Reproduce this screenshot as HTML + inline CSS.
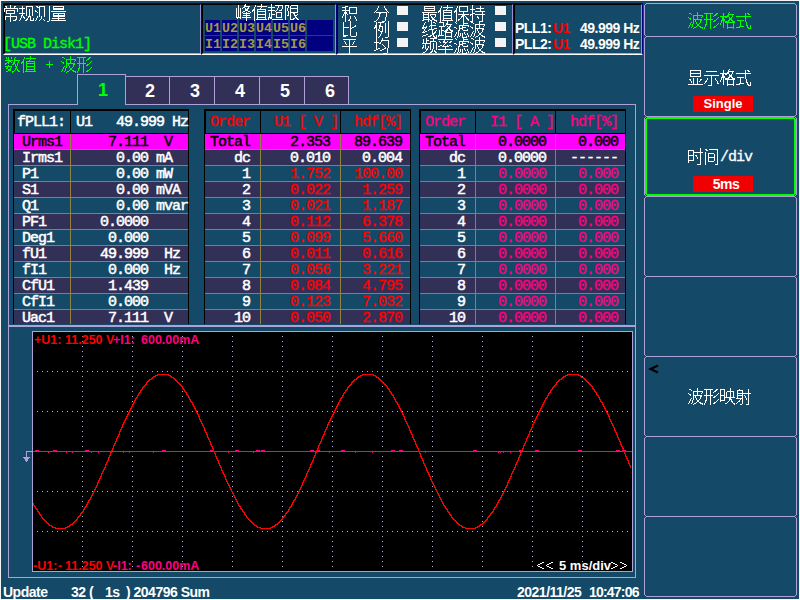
<!DOCTYPE html><html><head><meta charset="utf-8"><title>Power analyzer</title><style>*{margin:0;padding:0;box-sizing:border-box}
html,body{width:800px;height:600px;overflow:hidden;background:#f4f4f4;position:relative}
.a{position:absolute}
.m{font-family:"Liberation Mono",monospace;font-weight:normal;font-size:15px;letter-spacing:-1px;line-height:16px;white-space:pre;-webkit-text-stroke:0.5px currentColor}
.m13{font-family:"Liberation Mono",monospace;font-weight:bold;font-size:13.3px;line-height:13px;white-space:pre}
.mt{font-family:"Liberation Mono",monospace;font-weight:normal;font-size:15px;letter-spacing:-1px;line-height:16px;white-space:pre;-webkit-text-stroke:0.3px currentColor}
.mr{font-family:"Liberation Mono",monospace;font-weight:normal;font-size:15px;letter-spacing:-1px;line-height:16px;white-space:pre;-webkit-text-stroke:0.35px currentColor}
.s13{font-family:"Liberation Sans",sans-serif;font-weight:bold;font-size:13px;line-height:14px;white-space:pre}
.s14{font-family:"Liberation Sans",sans-serif;font-weight:bold;font-size:14px;letter-spacing:-0.5px;line-height:14px;white-space:pre}
.s12{font-family:"Liberation Sans",sans-serif;font-weight:bold;font-size:12.5px;line-height:12px;white-space:pre}
.s15r{font-family:"Liberation Sans",sans-serif;font-weight:normal;font-size:15px;line-height:15px;letter-spacing:-1px;white-space:pre}
.s12r{font-family:"Liberation Sans",sans-serif;font-weight:normal;font-size:12px;line-height:12px;white-space:pre}
.s11{font-family:"Liberation Sans",sans-serif;font-weight:bold;font-size:11px;line-height:12px;white-space:pre}
.s18{font-family:"Liberation Sans",sans-serif;font-weight:bold;font-size:18px;line-height:18px;white-space:pre}
.c60{width:60px;text-align:center}
</style></head><body><div class="a" style="left:1px;top:1px;width:798px;height:598px;background:#144a68;"></div><div class="a" style="left:3px;top:3px;width:199px;height:52px;border-top:1px solid #000080;border-left:1px solid #000080;border-bottom:1px solid #fff;border-right:1px solid #fff"><div style="width:100%;height:100%;border-top:1px solid #000;border-left:1px solid #000;border-bottom:1px solid #b0a0d8;border-right:1px solid #9890d0"></div></div><div class="a" style="left:201px;top:3px;width:136px;height:52px;border-top:1px solid #000080;border-left:1px solid #000080;border-bottom:1px solid #fff;border-right:1px solid #fff"><div style="width:100%;height:100%;border-top:1px solid #000;border-left:1px solid #000;border-bottom:1px solid #b0a0d8;border-right:1px solid #9890d0"></div></div><div class="a" style="left:336px;top:3px;width:178px;height:52px;border-top:1px solid #000080;border-left:1px solid #000080;border-bottom:1px solid #fff;border-right:1px solid #fff"><div style="width:100%;height:100%;border-top:1px solid #000;border-left:1px solid #000;border-bottom:1px solid #b0a0d8;border-right:1px solid #9890d0"></div></div><div class="a" style="left:513px;top:3px;width:130px;height:52px;border-top:1px solid #000080;border-left:1px solid #000080;border-bottom:1px solid #fff;border-right:1px solid #000080"><div style="width:100%;height:100%;border-top:1px solid #000;border-left:1px solid #000;border-bottom:1px solid #b0a0d8;border-right:1px solid #9890d0"></div></div><div class="a mr" style="left:3px;top:37px;color:#00ff00;">[USB Disk1]</div><div class="a" style="left:205px;top:20px;width:15px;height:15px;background:#000080;"></div><div class="a m13" style="left:205px;top:22px;color:#a09848;">U1</div><div class="a" style="left:222px;top:20px;width:15px;height:15px;background:#000080;"></div><div class="a m13" style="left:222px;top:22px;color:#a09848;">U2</div><div class="a" style="left:239px;top:20px;width:15px;height:15px;background:#000080;"></div><div class="a m13" style="left:239px;top:22px;color:#a09848;">U3</div><div class="a" style="left:256px;top:20px;width:15px;height:15px;background:#000080;"></div><div class="a m13" style="left:256px;top:22px;color:#a09848;">U4</div><div class="a" style="left:273px;top:20px;width:15px;height:15px;background:#000080;"></div><div class="a m13" style="left:273px;top:22px;color:#a09848;">U5</div><div class="a" style="left:290px;top:20px;width:15px;height:15px;background:#000080;"></div><div class="a m13" style="left:290px;top:22px;color:#a09848;">U6</div><div class="a" style="left:307px;top:20px;width:26px;height:15px;background:#000080;"></div><div class="a" style="left:205px;top:36px;width:15px;height:15px;background:#000080;"></div><div class="a m13" style="left:205px;top:38px;color:#a09848;">I1</div><div class="a" style="left:222px;top:36px;width:15px;height:15px;background:#000080;"></div><div class="a m13" style="left:222px;top:38px;color:#a09848;">I2</div><div class="a" style="left:239px;top:36px;width:15px;height:15px;background:#000080;"></div><div class="a m13" style="left:239px;top:38px;color:#a09848;">I3</div><div class="a" style="left:256px;top:36px;width:15px;height:15px;background:#000080;"></div><div class="a m13" style="left:256px;top:38px;color:#a09848;">I4</div><div class="a" style="left:273px;top:36px;width:15px;height:15px;background:#000080;"></div><div class="a m13" style="left:273px;top:38px;color:#a09848;">I5</div><div class="a" style="left:290px;top:36px;width:15px;height:15px;background:#000080;"></div><div class="a m13" style="left:290px;top:38px;color:#a09848;">I6</div><div class="a" style="left:307px;top:36px;width:26px;height:15px;background:#000080;"></div><div class="a" style="left:397px;top:6px;width:11px;height:9px;background:#f4f4f4;"></div><div class="a" style="left:495px;top:6px;width:11px;height:9px;background:#f4f4f4;"></div><div class="a" style="left:397px;top:22px;width:11px;height:9px;background:#f4f4f4;"></div><div class="a" style="left:495px;top:22px;width:11px;height:9px;background:#f4f4f4;"></div><div class="a" style="left:397px;top:38px;width:11px;height:9px;background:#f4f4f4;"></div><div class="a" style="left:495px;top:38px;width:11px;height:9px;background:#f4f4f4;"></div><div class="a s14" style="left:515px;top:21px;color:#ffffff;">PLL1:</div><div class="a s14" style="left:553px;top:21px;color:#ff0000;">U1</div><div class="a s14" style="left:580px;top:21px;color:#ffffff;">49.999 Hz</div><div class="a s14" style="left:515px;top:37px;color:#ffffff;">PLL2:</div><div class="a s14" style="left:553px;top:37px;color:#ff0000;">U1</div><div class="a s14" style="left:580px;top:37px;color:#ffffff;">49.999 Hz</div><svg class="a" style="left:46px;top:60px" width="8" height="10"><path fill="#00ff00" d="M0 4h7v1h-7zM3 1h1v7h-1z"/></svg><svg class="a" style="left:0;top:0" width="800" height="600"><path fill="#b0a0d8" d="M646 3h149v1h-149zM646 36h149v1h-149zM646 116h149v1h-149zM646 196h149v1h-149zM646 276h149v1h-149zM646 356h149v1h-149zM646 436h149v1h-149zM646 516h149v1h-149zM646 596h149v1h-149zM644 5h1v30h-1zM796 5h1v30h-1zM645 4h1v1h-1zM645 35h1v1h-1zM795 4h1v1h-1zM795 35h1v1h-1zM644 38h1v77h-1zM796 38h1v77h-1zM645 37h1v1h-1zM645 115h1v1h-1zM795 37h1v1h-1zM795 115h1v1h-1zM644 118h1v77h-1zM796 118h1v77h-1zM645 117h1v1h-1zM645 195h1v1h-1zM795 117h1v1h-1zM795 195h1v1h-1zM644 198h1v77h-1zM796 198h1v77h-1zM645 197h1v1h-1zM645 275h1v1h-1zM795 197h1v1h-1zM795 275h1v1h-1zM644 278h1v77h-1zM796 278h1v77h-1zM645 277h1v1h-1zM645 355h1v1h-1zM795 277h1v1h-1zM795 355h1v1h-1zM644 358h1v77h-1zM796 358h1v77h-1zM645 357h1v1h-1zM645 435h1v1h-1zM795 357h1v1h-1zM795 435h1v1h-1zM644 438h1v77h-1zM796 438h1v77h-1zM645 437h1v1h-1zM645 515h1v1h-1zM795 437h1v1h-1zM795 515h1v1h-1zM644 518h1v77h-1zM796 518h1v77h-1zM645 517h1v1h-1zM645 595h1v1h-1zM795 517h1v1h-1zM795 595h1v1h-1z"/><path fill="#00ff00" d="M647 117h147v2h-147zM647 194h147v2h-147zM645 119h2v75h-2zM794 119h2v75h-2zM646 118h1v1h-1zM794 118h1v1h-1zM646 194h1v1h-1zM794 194h1v1h-1z"/></svg><div class="a" style="left:693px;top:96px;width:60px;height:16px;background:#f00000;"></div><div class="a s13 c60" style="left:693px;top:97px;color:#ffffff;">Single</div><div class="a mt" style="left:720px;top:150px;color:#ffffff;">/div</div><div class="a" style="left:693px;top:176px;width:60px;height:16px;background:#f00000;"></div><div class="a s14 c60" style="left:696px;top:177px;color:#ffffff;">5ms</div><svg class="a" style="left:648px;top:364px" width="12" height="11"><path d="M10 1.5 L2.5 5 L10 8.5" stroke="#000" stroke-width="2.2" fill="none"/></svg><div class="a" style="left:8px;top:104px;width:1px;height:474px;background:#b0a0d8;"></div><div class="a" style="left:635px;top:104px;width:1px;height:474px;background:#b0a0d8;"></div><div class="a" style="left:8px;top:104px;width:70px;height:1px;background:#b0a0d8;"></div><div class="a" style="left:125px;top:104px;width:511px;height:1px;background:#b0a0d8;"></div><div class="a" style="left:8px;top:325px;width:628px;height:2px;background:#b0a0d8;"></div><div class="a" style="left:8px;top:577px;width:628px;height:1px;background:#b0a0d8;"></div><div class="a" style="left:77px;top:74px;width:1px;height:31px;background:#b0a0d8;"></div><div class="a" style="left:77px;top:74px;width:49px;height:1px;background:#b0a0d8;"></div><div class="a" style="left:125px;top:74px;width:1px;height:31px;background:#b0a0d8;"></div><div class="a" style="left:126px;top:77px;width:223px;height:27px;background:#333058;"></div><div class="a" style="left:125px;top:76px;width:224px;height:1px;background:#b0a0d8;"></div><div class="a" style="left:169px;top:76px;width:1px;height:28px;background:#b0a0d8;"></div><div class="a" style="left:214px;top:76px;width:1px;height:28px;background:#b0a0d8;"></div><div class="a" style="left:259px;top:76px;width:1px;height:28px;background:#b0a0d8;"></div><div class="a" style="left:304px;top:76px;width:1px;height:28px;background:#b0a0d8;"></div><div class="a" style="left:348px;top:76px;width:1px;height:28px;background:#b0a0d8;"></div><div class="a s18" style="left:98px;top:81px;color:#00ff00;">1</div><div class="a s18" style="left:145px;top:82px;color:#ffffff;">2</div><div class="a s18" style="left:190px;top:82px;color:#ffffff;">3</div><div class="a s18" style="left:235px;top:82px;color:#ffffff;">4</div><div class="a s18" style="left:280px;top:82px;color:#ffffff;">5</div><div class="a s18" style="left:325px;top:82px;color:#ffffff;">6</div><div class="a" style="left:13px;top:109px;width:176px;height:215px;background:#000;"></div><div class="a" style="left:15px;top:111px;width:173px;height:22px;background:#144a68;"></div><div class="a" style="left:70px;top:111px;width:1px;height:22px;background:#000;"></div><div class="a" style="left:14px;top:134px;width:174px;height:15px;background:#ff00ff;"></div><div class="a" style="left:14px;top:149px;width:174px;height:1px;background:#8c8440;"></div><div class="a" style="left:14px;top:150px;width:174px;height:15px;background:#333058;"></div><div class="a" style="left:14px;top:165px;width:174px;height:1px;background:#8c8440;"></div><div class="a" style="left:14px;top:166px;width:174px;height:15px;background:#144a68;"></div><div class="a" style="left:14px;top:181px;width:174px;height:1px;background:#8c8440;"></div><div class="a" style="left:14px;top:182px;width:174px;height:15px;background:#333058;"></div><div class="a" style="left:14px;top:197px;width:174px;height:1px;background:#8c8440;"></div><div class="a" style="left:14px;top:198px;width:174px;height:15px;background:#144a68;"></div><div class="a" style="left:14px;top:213px;width:174px;height:1px;background:#8c8440;"></div><div class="a" style="left:14px;top:214px;width:174px;height:15px;background:#333058;"></div><div class="a" style="left:14px;top:229px;width:174px;height:1px;background:#8c8440;"></div><div class="a" style="left:14px;top:230px;width:174px;height:15px;background:#144a68;"></div><div class="a" style="left:14px;top:245px;width:174px;height:1px;background:#8c8440;"></div><div class="a" style="left:14px;top:246px;width:174px;height:15px;background:#333058;"></div><div class="a" style="left:14px;top:261px;width:174px;height:1px;background:#8c8440;"></div><div class="a" style="left:14px;top:262px;width:174px;height:15px;background:#144a68;"></div><div class="a" style="left:14px;top:277px;width:174px;height:1px;background:#8c8440;"></div><div class="a" style="left:14px;top:278px;width:174px;height:15px;background:#333058;"></div><div class="a" style="left:14px;top:293px;width:174px;height:1px;background:#8c8440;"></div><div class="a" style="left:14px;top:294px;width:174px;height:15px;background:#144a68;"></div><div class="a" style="left:14px;top:309px;width:174px;height:1px;background:#8c8440;"></div><div class="a" style="left:14px;top:310px;width:174px;height:14px;background:#333058;"></div><div class="a" style="left:70px;top:134px;width:1px;height:190px;background:#8c8440;"></div><div class="a" style="left:204px;top:109px;width:207px;height:215px;background:#000;"></div><div class="a" style="left:206px;top:111px;width:204px;height:22px;background:#144a68;"></div><div class="a" style="left:260px;top:111px;width:1px;height:22px;background:#000;"></div><div class="a" style="left:340px;top:111px;width:1px;height:22px;background:#000;"></div><div class="a" style="left:205px;top:134px;width:205px;height:15px;background:#ff00ff;"></div><div class="a" style="left:205px;top:149px;width:205px;height:1px;background:#8c8440;"></div><div class="a" style="left:205px;top:150px;width:205px;height:15px;background:#333058;"></div><div class="a" style="left:205px;top:165px;width:205px;height:1px;background:#8c8440;"></div><div class="a" style="left:205px;top:166px;width:205px;height:15px;background:#144a68;"></div><div class="a" style="left:205px;top:181px;width:205px;height:1px;background:#8c8440;"></div><div class="a" style="left:205px;top:182px;width:205px;height:15px;background:#333058;"></div><div class="a" style="left:205px;top:197px;width:205px;height:1px;background:#8c8440;"></div><div class="a" style="left:205px;top:198px;width:205px;height:15px;background:#144a68;"></div><div class="a" style="left:205px;top:213px;width:205px;height:1px;background:#8c8440;"></div><div class="a" style="left:205px;top:214px;width:205px;height:15px;background:#333058;"></div><div class="a" style="left:205px;top:229px;width:205px;height:1px;background:#8c8440;"></div><div class="a" style="left:205px;top:230px;width:205px;height:15px;background:#144a68;"></div><div class="a" style="left:205px;top:245px;width:205px;height:1px;background:#8c8440;"></div><div class="a" style="left:205px;top:246px;width:205px;height:15px;background:#333058;"></div><div class="a" style="left:205px;top:261px;width:205px;height:1px;background:#8c8440;"></div><div class="a" style="left:205px;top:262px;width:205px;height:15px;background:#144a68;"></div><div class="a" style="left:205px;top:277px;width:205px;height:1px;background:#8c8440;"></div><div class="a" style="left:205px;top:278px;width:205px;height:15px;background:#333058;"></div><div class="a" style="left:205px;top:293px;width:205px;height:1px;background:#8c8440;"></div><div class="a" style="left:205px;top:294px;width:205px;height:15px;background:#144a68;"></div><div class="a" style="left:205px;top:309px;width:205px;height:1px;background:#8c8440;"></div><div class="a" style="left:205px;top:310px;width:205px;height:14px;background:#333058;"></div><div class="a" style="left:260px;top:134px;width:1px;height:190px;background:#8c8440;"></div><div class="a" style="left:340px;top:134px;width:1px;height:190px;background:#8c8440;"></div><div class="a" style="left:419px;top:109px;width:207px;height:215px;background:#000;"></div><div class="a" style="left:421px;top:111px;width:204px;height:22px;background:#144a68;"></div><div class="a" style="left:475px;top:111px;width:1px;height:22px;background:#000;"></div><div class="a" style="left:555px;top:111px;width:1px;height:22px;background:#000;"></div><div class="a" style="left:420px;top:134px;width:205px;height:15px;background:#ff00ff;"></div><div class="a" style="left:420px;top:149px;width:205px;height:1px;background:#8c8440;"></div><div class="a" style="left:420px;top:150px;width:205px;height:15px;background:#333058;"></div><div class="a" style="left:420px;top:165px;width:205px;height:1px;background:#8c8440;"></div><div class="a" style="left:420px;top:166px;width:205px;height:15px;background:#144a68;"></div><div class="a" style="left:420px;top:181px;width:205px;height:1px;background:#8c8440;"></div><div class="a" style="left:420px;top:182px;width:205px;height:15px;background:#333058;"></div><div class="a" style="left:420px;top:197px;width:205px;height:1px;background:#8c8440;"></div><div class="a" style="left:420px;top:198px;width:205px;height:15px;background:#144a68;"></div><div class="a" style="left:420px;top:213px;width:205px;height:1px;background:#8c8440;"></div><div class="a" style="left:420px;top:214px;width:205px;height:15px;background:#333058;"></div><div class="a" style="left:420px;top:229px;width:205px;height:1px;background:#8c8440;"></div><div class="a" style="left:420px;top:230px;width:205px;height:15px;background:#144a68;"></div><div class="a" style="left:420px;top:245px;width:205px;height:1px;background:#8c8440;"></div><div class="a" style="left:420px;top:246px;width:205px;height:15px;background:#333058;"></div><div class="a" style="left:420px;top:261px;width:205px;height:1px;background:#8c8440;"></div><div class="a" style="left:420px;top:262px;width:205px;height:15px;background:#144a68;"></div><div class="a" style="left:420px;top:277px;width:205px;height:1px;background:#8c8440;"></div><div class="a" style="left:420px;top:278px;width:205px;height:15px;background:#333058;"></div><div class="a" style="left:420px;top:293px;width:205px;height:1px;background:#8c8440;"></div><div class="a" style="left:420px;top:294px;width:205px;height:15px;background:#144a68;"></div><div class="a" style="left:420px;top:309px;width:205px;height:1px;background:#8c8440;"></div><div class="a" style="left:420px;top:310px;width:205px;height:14px;background:#333058;"></div><div class="a" style="left:475px;top:134px;width:1px;height:190px;background:#8c8440;"></div><div class="a" style="left:555px;top:134px;width:1px;height:190px;background:#8c8440;"></div><div class="a m" style="left:17px;top:115px;color:#ffffff;">fPLL1:</div><div class="a m" style="left:76px;top:115px;color:#ffffff;">U1   49.999 Hz</div><div class="a m" style="left:22px;top:135px;color:#000;">Urms1</div><div class="a m" style="left:76px;top:135px;color:#000;">    7.111  V</div><div class="a m" style="left:22px;top:151px;color:#ffffff;">Irms1</div><div class="a m" style="left:76px;top:151px;color:#ffffff;">     0.00 mA</div><div class="a m" style="left:22px;top:167px;color:#ffffff;">P1</div><div class="a m" style="left:76px;top:167px;color:#ffffff;">     0.00 mW</div><div class="a m" style="left:22px;top:183px;color:#ffffff;">S1</div><div class="a m" style="left:76px;top:183px;color:#ffffff;">     0.00 mVA</div><div class="a m" style="left:22px;top:199px;color:#ffffff;">Q1</div><div class="a m" style="left:76px;top:199px;color:#ffffff;">     0.00 mvar</div><div class="a m" style="left:22px;top:215px;color:#ffffff;">PF1</div><div class="a m" style="left:76px;top:215px;color:#ffffff;">   0.0000</div><div class="a m" style="left:22px;top:231px;color:#ffffff;">Deg1</div><div class="a m" style="left:76px;top:231px;color:#ffffff;">    0.000</div><div class="a m" style="left:22px;top:247px;color:#ffffff;">fU1</div><div class="a m" style="left:76px;top:247px;color:#ffffff;">   49.999  Hz</div><div class="a m" style="left:22px;top:263px;color:#ffffff;">fI1</div><div class="a m" style="left:76px;top:263px;color:#ffffff;">    0.000  Hz</div><div class="a m" style="left:22px;top:279px;color:#ffffff;">CfU1</div><div class="a m" style="left:76px;top:279px;color:#ffffff;">    1.439</div><div class="a m" style="left:22px;top:295px;color:#ffffff;">CfI1</div><div class="a m" style="left:76px;top:295px;color:#ffffff;">    0.000</div><div class="a m" style="left:22px;top:311px;color:#ffffff;">Uac1</div><div class="a m" style="left:76px;top:311px;color:#ffffff;">    7.111  V</div><div class="a mr" style="left:210px;top:115px;color:#ff0000;">Order</div><div class="a mr" style="left:274px;top:115px;color:#ff0000;">U1 [ V ]</div><div class="a mr" style="left:354px;top:115px;color:#ff0000;">hdf[%]</div><div class="a m" style="left:210px;top:135px;color:#000;">Total</div><div class="a m" style="left:290px;top:135px;color:#000;">2.353</div><div class="a m" style="left:354px;top:135px;color:#000;">89.639</div><div class="a m" style="left:234px;top:151px;color:#ffffff;">dc</div><div class="a m" style="left:290px;top:151px;color:#ffffff;">0.010</div><div class="a m" style="left:362px;top:151px;color:#ffffff;">0.004</div><div class="a m" style="left:242px;top:167px;color:#ffffff;">1</div><div class="a mr" style="left:290px;top:167px;color:#ff0000;">1.752</div><div class="a mr" style="left:354px;top:167px;color:#ff0000;">100.00</div><div class="a m" style="left:242px;top:183px;color:#ffffff;">2</div><div class="a mr" style="left:290px;top:183px;color:#ff0000;">0.022</div><div class="a mr" style="left:362px;top:183px;color:#ff0000;">1.259</div><div class="a m" style="left:242px;top:199px;color:#ffffff;">3</div><div class="a mr" style="left:290px;top:199px;color:#ff0000;">0.021</div><div class="a mr" style="left:362px;top:199px;color:#ff0000;">1.187</div><div class="a m" style="left:242px;top:215px;color:#ffffff;">4</div><div class="a mr" style="left:290px;top:215px;color:#ff0000;">0.112</div><div class="a mr" style="left:362px;top:215px;color:#ff0000;">6.378</div><div class="a m" style="left:242px;top:231px;color:#ffffff;">5</div><div class="a mr" style="left:290px;top:231px;color:#ff0000;">0.099</div><div class="a mr" style="left:362px;top:231px;color:#ff0000;">5.660</div><div class="a m" style="left:242px;top:247px;color:#ffffff;">6</div><div class="a mr" style="left:290px;top:247px;color:#ff0000;">0.011</div><div class="a mr" style="left:362px;top:247px;color:#ff0000;">0.616</div><div class="a m" style="left:242px;top:263px;color:#ffffff;">7</div><div class="a mr" style="left:290px;top:263px;color:#ff0000;">0.056</div><div class="a mr" style="left:362px;top:263px;color:#ff0000;">3.221</div><div class="a m" style="left:242px;top:279px;color:#ffffff;">8</div><div class="a mr" style="left:290px;top:279px;color:#ff0000;">0.084</div><div class="a mr" style="left:362px;top:279px;color:#ff0000;">4.795</div><div class="a m" style="left:242px;top:295px;color:#ffffff;">9</div><div class="a mr" style="left:290px;top:295px;color:#ff0000;">0.123</div><div class="a mr" style="left:362px;top:295px;color:#ff0000;">7.032</div><div class="a m" style="left:234px;top:311px;color:#ffffff;">10</div><div class="a mr" style="left:290px;top:311px;color:#ff0000;">0.050</div><div class="a mr" style="left:362px;top:311px;color:#ff0000;">2.870</div><div class="a mr" style="left:425px;top:115px;color:#ff0080;">Order</div><div class="a mr" style="left:490px;top:115px;color:#ff0080;">I1 [ A ]</div><div class="a mr" style="left:570px;top:115px;color:#ff0080;">hdf[%]</div><div class="a m" style="left:425px;top:135px;color:#000;">Total</div><div class="a m" style="left:498px;top:135px;color:#000;">0.0000</div><div class="a m" style="left:578px;top:135px;color:#000;">0.000</div><div class="a m" style="left:449px;top:151px;color:#ffffff;">dc</div><div class="a m" style="left:498px;top:151px;color:#ffffff;">0.0000</div><div class="a mt" style="left:570px;top:151px;color:#ffffff;">------</div><div class="a m" style="left:457px;top:167px;color:#ffffff;">1</div><div class="a mr" style="left:498px;top:167px;color:#ff0080;">0.0000</div><div class="a mr" style="left:578px;top:167px;color:#ff0080;">0.000</div><div class="a m" style="left:457px;top:183px;color:#ffffff;">2</div><div class="a mr" style="left:498px;top:183px;color:#ff0080;">0.0000</div><div class="a mr" style="left:578px;top:183px;color:#ff0080;">0.000</div><div class="a m" style="left:457px;top:199px;color:#ffffff;">3</div><div class="a mr" style="left:498px;top:199px;color:#ff0080;">0.0000</div><div class="a mr" style="left:578px;top:199px;color:#ff0080;">0.000</div><div class="a m" style="left:457px;top:215px;color:#ffffff;">4</div><div class="a mr" style="left:498px;top:215px;color:#ff0080;">0.0000</div><div class="a mr" style="left:578px;top:215px;color:#ff0080;">0.000</div><div class="a m" style="left:457px;top:231px;color:#ffffff;">5</div><div class="a mr" style="left:498px;top:231px;color:#ff0080;">0.0000</div><div class="a mr" style="left:578px;top:231px;color:#ff0080;">0.000</div><div class="a m" style="left:457px;top:247px;color:#ffffff;">6</div><div class="a mr" style="left:498px;top:247px;color:#ff0080;">0.0000</div><div class="a mr" style="left:578px;top:247px;color:#ff0080;">0.000</div><div class="a m" style="left:457px;top:263px;color:#ffffff;">7</div><div class="a mr" style="left:498px;top:263px;color:#ff0080;">0.0000</div><div class="a mr" style="left:578px;top:263px;color:#ff0080;">0.000</div><div class="a m" style="left:457px;top:279px;color:#ffffff;">8</div><div class="a mr" style="left:498px;top:279px;color:#ff0080;">0.0000</div><div class="a mr" style="left:578px;top:279px;color:#ff0080;">0.000</div><div class="a m" style="left:457px;top:295px;color:#ffffff;">9</div><div class="a mr" style="left:498px;top:295px;color:#ff0080;">0.0000</div><div class="a mr" style="left:578px;top:295px;color:#ff0080;">0.000</div><div class="a m" style="left:449px;top:311px;color:#ffffff;">10</div><div class="a mr" style="left:498px;top:311px;color:#ff0080;">0.0000</div><div class="a mr" style="left:578px;top:311px;color:#ff0080;">0.000</div><div class="a" style="left:32px;top:331px;width:601px;height:241px;background:#b0a0d8;"></div><div class="a" style="left:33px;top:332px;width:599px;height:239px;background:#000;"></div><svg class="a" style="left:0;top:0" width="800" height="600" shape-rendering="crispEdges"><path fill="#b0b0e0" d="M37 371h1v1h-1zM42 371h1v1h-1zM47 371h1v1h-1zM52 371h1v1h-1zM57 371h1v1h-1zM62 371h1v1h-1zM67 371h1v1h-1zM72 371h1v1h-1zM77 371h1v1h-1zM82 371h1v1h-1zM87 371h1v1h-1zM92 371h1v1h-1zM97 371h1v1h-1zM102 371h1v1h-1zM107 371h1v1h-1zM112 371h1v1h-1zM117 371h1v1h-1zM122 371h1v1h-1zM127 371h1v1h-1zM132 371h1v1h-1zM137 371h1v1h-1zM142 371h1v1h-1zM147 371h1v1h-1zM152 371h1v1h-1zM157 371h1v1h-1zM162 371h1v1h-1zM167 371h1v1h-1zM172 371h1v1h-1zM177 371h1v1h-1zM182 371h1v1h-1zM187 371h1v1h-1zM192 371h1v1h-1zM197 371h1v1h-1zM202 371h1v1h-1zM207 371h1v1h-1zM212 371h1v1h-1zM217 371h1v1h-1zM222 371h1v1h-1zM227 371h1v1h-1zM232 371h1v1h-1zM237 371h1v1h-1zM242 371h1v1h-1zM247 371h1v1h-1zM252 371h1v1h-1zM257 371h1v1h-1zM262 371h1v1h-1zM267 371h1v1h-1zM272 371h1v1h-1zM277 371h1v1h-1zM282 371h1v1h-1zM287 371h1v1h-1zM292 371h1v1h-1zM297 371h1v1h-1zM302 371h1v1h-1zM307 371h1v1h-1zM312 371h1v1h-1zM317 371h1v1h-1zM322 371h1v1h-1zM327 371h1v1h-1zM332 371h1v1h-1zM337 371h1v1h-1zM342 371h1v1h-1zM347 371h1v1h-1zM352 371h1v1h-1zM357 371h1v1h-1zM362 371h1v1h-1zM367 371h1v1h-1zM372 371h1v1h-1zM377 371h1v1h-1zM382 371h1v1h-1zM387 371h1v1h-1zM392 371h1v1h-1zM397 371h1v1h-1zM402 371h1v1h-1zM407 371h1v1h-1zM412 371h1v1h-1zM417 371h1v1h-1zM422 371h1v1h-1zM427 371h1v1h-1zM432 371h1v1h-1zM437 371h1v1h-1zM442 371h1v1h-1zM447 371h1v1h-1zM452 371h1v1h-1zM457 371h1v1h-1zM462 371h1v1h-1zM467 371h1v1h-1zM472 371h1v1h-1zM477 371h1v1h-1zM482 371h1v1h-1zM487 371h1v1h-1zM492 371h1v1h-1zM497 371h1v1h-1zM502 371h1v1h-1zM507 371h1v1h-1zM512 371h1v1h-1zM517 371h1v1h-1zM522 371h1v1h-1zM527 371h1v1h-1zM532 371h1v1h-1zM537 371h1v1h-1zM542 371h1v1h-1zM547 371h1v1h-1zM552 371h1v1h-1zM557 371h1v1h-1zM562 371h1v1h-1zM567 371h1v1h-1zM572 371h1v1h-1zM577 371h1v1h-1zM582 371h1v1h-1zM587 371h1v1h-1zM592 371h1v1h-1zM597 371h1v1h-1zM602 371h1v1h-1zM607 371h1v1h-1zM612 371h1v1h-1zM617 371h1v1h-1zM622 371h1v1h-1zM627 371h1v1h-1zM37 411h1v1h-1zM42 411h1v1h-1zM47 411h1v1h-1zM52 411h1v1h-1zM57 411h1v1h-1zM62 411h1v1h-1zM67 411h1v1h-1zM72 411h1v1h-1zM77 411h1v1h-1zM82 411h1v1h-1zM87 411h1v1h-1zM92 411h1v1h-1zM97 411h1v1h-1zM102 411h1v1h-1zM107 411h1v1h-1zM112 411h1v1h-1zM117 411h1v1h-1zM122 411h1v1h-1zM127 411h1v1h-1zM132 411h1v1h-1zM137 411h1v1h-1zM142 411h1v1h-1zM147 411h1v1h-1zM152 411h1v1h-1zM157 411h1v1h-1zM162 411h1v1h-1zM167 411h1v1h-1zM172 411h1v1h-1zM177 411h1v1h-1zM182 411h1v1h-1zM187 411h1v1h-1zM192 411h1v1h-1zM197 411h1v1h-1zM202 411h1v1h-1zM207 411h1v1h-1zM212 411h1v1h-1zM217 411h1v1h-1zM222 411h1v1h-1zM227 411h1v1h-1zM232 411h1v1h-1zM237 411h1v1h-1zM242 411h1v1h-1zM247 411h1v1h-1zM252 411h1v1h-1zM257 411h1v1h-1zM262 411h1v1h-1zM267 411h1v1h-1zM272 411h1v1h-1zM277 411h1v1h-1zM282 411h1v1h-1zM287 411h1v1h-1zM292 411h1v1h-1zM297 411h1v1h-1zM302 411h1v1h-1zM307 411h1v1h-1zM312 411h1v1h-1zM317 411h1v1h-1zM322 411h1v1h-1zM327 411h1v1h-1zM332 411h1v1h-1zM337 411h1v1h-1zM342 411h1v1h-1zM347 411h1v1h-1zM352 411h1v1h-1zM357 411h1v1h-1zM362 411h1v1h-1zM367 411h1v1h-1zM372 411h1v1h-1zM377 411h1v1h-1zM382 411h1v1h-1zM387 411h1v1h-1zM392 411h1v1h-1zM397 411h1v1h-1zM402 411h1v1h-1zM407 411h1v1h-1zM412 411h1v1h-1zM417 411h1v1h-1zM422 411h1v1h-1zM427 411h1v1h-1zM432 411h1v1h-1zM437 411h1v1h-1zM442 411h1v1h-1zM447 411h1v1h-1zM452 411h1v1h-1zM457 411h1v1h-1zM462 411h1v1h-1zM467 411h1v1h-1zM472 411h1v1h-1zM477 411h1v1h-1zM482 411h1v1h-1zM487 411h1v1h-1zM492 411h1v1h-1zM497 411h1v1h-1zM502 411h1v1h-1zM507 411h1v1h-1zM512 411h1v1h-1zM517 411h1v1h-1zM522 411h1v1h-1zM527 411h1v1h-1zM532 411h1v1h-1zM537 411h1v1h-1zM542 411h1v1h-1zM547 411h1v1h-1zM552 411h1v1h-1zM557 411h1v1h-1zM562 411h1v1h-1zM567 411h1v1h-1zM572 411h1v1h-1zM577 411h1v1h-1zM582 411h1v1h-1zM587 411h1v1h-1zM592 411h1v1h-1zM597 411h1v1h-1zM602 411h1v1h-1zM607 411h1v1h-1zM612 411h1v1h-1zM617 411h1v1h-1zM622 411h1v1h-1zM627 411h1v1h-1zM37 451h1v1h-1zM42 451h1v1h-1zM47 451h1v1h-1zM52 451h1v1h-1zM57 451h1v1h-1zM62 451h1v1h-1zM67 451h1v1h-1zM72 451h1v1h-1zM77 451h1v1h-1zM82 451h1v1h-1zM87 451h1v1h-1zM92 451h1v1h-1zM97 451h1v1h-1zM102 451h1v1h-1zM107 451h1v1h-1zM112 451h1v1h-1zM117 451h1v1h-1zM122 451h1v1h-1zM127 451h1v1h-1zM132 451h1v1h-1zM137 451h1v1h-1zM142 451h1v1h-1zM147 451h1v1h-1zM152 451h1v1h-1zM157 451h1v1h-1zM162 451h1v1h-1zM167 451h1v1h-1zM172 451h1v1h-1zM177 451h1v1h-1zM182 451h1v1h-1zM187 451h1v1h-1zM192 451h1v1h-1zM197 451h1v1h-1zM202 451h1v1h-1zM207 451h1v1h-1zM212 451h1v1h-1zM217 451h1v1h-1zM222 451h1v1h-1zM227 451h1v1h-1zM232 451h1v1h-1zM237 451h1v1h-1zM242 451h1v1h-1zM247 451h1v1h-1zM252 451h1v1h-1zM257 451h1v1h-1zM262 451h1v1h-1zM267 451h1v1h-1zM272 451h1v1h-1zM277 451h1v1h-1zM282 451h1v1h-1zM287 451h1v1h-1zM292 451h1v1h-1zM297 451h1v1h-1zM302 451h1v1h-1zM307 451h1v1h-1zM312 451h1v1h-1zM317 451h1v1h-1zM322 451h1v1h-1zM327 451h1v1h-1zM332 451h1v1h-1zM337 451h1v1h-1zM342 451h1v1h-1zM347 451h1v1h-1zM352 451h1v1h-1zM357 451h1v1h-1zM362 451h1v1h-1zM367 451h1v1h-1zM372 451h1v1h-1zM377 451h1v1h-1zM382 451h1v1h-1zM387 451h1v1h-1zM392 451h1v1h-1zM397 451h1v1h-1zM402 451h1v1h-1zM407 451h1v1h-1zM412 451h1v1h-1zM417 451h1v1h-1zM422 451h1v1h-1zM427 451h1v1h-1zM432 451h1v1h-1zM437 451h1v1h-1zM442 451h1v1h-1zM447 451h1v1h-1zM452 451h1v1h-1zM457 451h1v1h-1zM462 451h1v1h-1zM467 451h1v1h-1zM472 451h1v1h-1zM477 451h1v1h-1zM482 451h1v1h-1zM487 451h1v1h-1zM492 451h1v1h-1zM497 451h1v1h-1zM502 451h1v1h-1zM507 451h1v1h-1zM512 451h1v1h-1zM517 451h1v1h-1zM522 451h1v1h-1zM527 451h1v1h-1zM532 451h1v1h-1zM537 451h1v1h-1zM542 451h1v1h-1zM547 451h1v1h-1zM552 451h1v1h-1zM557 451h1v1h-1zM562 451h1v1h-1zM567 451h1v1h-1zM572 451h1v1h-1zM577 451h1v1h-1zM582 451h1v1h-1zM587 451h1v1h-1zM592 451h1v1h-1zM597 451h1v1h-1zM602 451h1v1h-1zM607 451h1v1h-1zM612 451h1v1h-1zM617 451h1v1h-1zM622 451h1v1h-1zM627 451h1v1h-1zM37 491h1v1h-1zM42 491h1v1h-1zM47 491h1v1h-1zM52 491h1v1h-1zM57 491h1v1h-1zM62 491h1v1h-1zM67 491h1v1h-1zM72 491h1v1h-1zM77 491h1v1h-1zM82 491h1v1h-1zM87 491h1v1h-1zM92 491h1v1h-1zM97 491h1v1h-1zM102 491h1v1h-1zM107 491h1v1h-1zM112 491h1v1h-1zM117 491h1v1h-1zM122 491h1v1h-1zM127 491h1v1h-1zM132 491h1v1h-1zM137 491h1v1h-1zM142 491h1v1h-1zM147 491h1v1h-1zM152 491h1v1h-1zM157 491h1v1h-1zM162 491h1v1h-1zM167 491h1v1h-1zM172 491h1v1h-1zM177 491h1v1h-1zM182 491h1v1h-1zM187 491h1v1h-1zM192 491h1v1h-1zM197 491h1v1h-1zM202 491h1v1h-1zM207 491h1v1h-1zM212 491h1v1h-1zM217 491h1v1h-1zM222 491h1v1h-1zM227 491h1v1h-1zM232 491h1v1h-1zM237 491h1v1h-1zM242 491h1v1h-1zM247 491h1v1h-1zM252 491h1v1h-1zM257 491h1v1h-1zM262 491h1v1h-1zM267 491h1v1h-1zM272 491h1v1h-1zM277 491h1v1h-1zM282 491h1v1h-1zM287 491h1v1h-1zM292 491h1v1h-1zM297 491h1v1h-1zM302 491h1v1h-1zM307 491h1v1h-1zM312 491h1v1h-1zM317 491h1v1h-1zM322 491h1v1h-1zM327 491h1v1h-1zM332 491h1v1h-1zM337 491h1v1h-1zM342 491h1v1h-1zM347 491h1v1h-1zM352 491h1v1h-1zM357 491h1v1h-1zM362 491h1v1h-1zM367 491h1v1h-1zM372 491h1v1h-1zM377 491h1v1h-1zM382 491h1v1h-1zM387 491h1v1h-1zM392 491h1v1h-1zM397 491h1v1h-1zM402 491h1v1h-1zM407 491h1v1h-1zM412 491h1v1h-1zM417 491h1v1h-1zM422 491h1v1h-1zM427 491h1v1h-1zM432 491h1v1h-1zM437 491h1v1h-1zM442 491h1v1h-1zM447 491h1v1h-1zM452 491h1v1h-1zM457 491h1v1h-1zM462 491h1v1h-1zM467 491h1v1h-1zM472 491h1v1h-1zM477 491h1v1h-1zM482 491h1v1h-1zM487 491h1v1h-1zM492 491h1v1h-1zM497 491h1v1h-1zM502 491h1v1h-1zM507 491h1v1h-1zM512 491h1v1h-1zM517 491h1v1h-1zM522 491h1v1h-1zM527 491h1v1h-1zM532 491h1v1h-1zM537 491h1v1h-1zM542 491h1v1h-1zM547 491h1v1h-1zM552 491h1v1h-1zM557 491h1v1h-1zM562 491h1v1h-1zM567 491h1v1h-1zM572 491h1v1h-1zM577 491h1v1h-1zM582 491h1v1h-1zM587 491h1v1h-1zM592 491h1v1h-1zM597 491h1v1h-1zM602 491h1v1h-1zM607 491h1v1h-1zM612 491h1v1h-1zM617 491h1v1h-1zM622 491h1v1h-1zM627 491h1v1h-1zM37 531h1v1h-1zM42 531h1v1h-1zM47 531h1v1h-1zM52 531h1v1h-1zM57 531h1v1h-1zM62 531h1v1h-1zM67 531h1v1h-1zM72 531h1v1h-1zM77 531h1v1h-1zM82 531h1v1h-1zM87 531h1v1h-1zM92 531h1v1h-1zM97 531h1v1h-1zM102 531h1v1h-1zM107 531h1v1h-1zM112 531h1v1h-1zM117 531h1v1h-1zM122 531h1v1h-1zM127 531h1v1h-1zM132 531h1v1h-1zM137 531h1v1h-1zM142 531h1v1h-1zM147 531h1v1h-1zM152 531h1v1h-1zM157 531h1v1h-1zM162 531h1v1h-1zM167 531h1v1h-1zM172 531h1v1h-1zM177 531h1v1h-1zM182 531h1v1h-1zM187 531h1v1h-1zM192 531h1v1h-1zM197 531h1v1h-1zM202 531h1v1h-1zM207 531h1v1h-1zM212 531h1v1h-1zM217 531h1v1h-1zM222 531h1v1h-1zM227 531h1v1h-1zM232 531h1v1h-1zM237 531h1v1h-1zM242 531h1v1h-1zM247 531h1v1h-1zM252 531h1v1h-1zM257 531h1v1h-1zM262 531h1v1h-1zM267 531h1v1h-1zM272 531h1v1h-1zM277 531h1v1h-1zM282 531h1v1h-1zM287 531h1v1h-1zM292 531h1v1h-1zM297 531h1v1h-1zM302 531h1v1h-1zM307 531h1v1h-1zM312 531h1v1h-1zM317 531h1v1h-1zM322 531h1v1h-1zM327 531h1v1h-1zM332 531h1v1h-1zM337 531h1v1h-1zM342 531h1v1h-1zM347 531h1v1h-1zM352 531h1v1h-1zM357 531h1v1h-1zM362 531h1v1h-1zM367 531h1v1h-1zM372 531h1v1h-1zM377 531h1v1h-1zM382 531h1v1h-1zM387 531h1v1h-1zM392 531h1v1h-1zM397 531h1v1h-1zM402 531h1v1h-1zM407 531h1v1h-1zM412 531h1v1h-1zM417 531h1v1h-1zM422 531h1v1h-1zM427 531h1v1h-1zM432 531h1v1h-1zM437 531h1v1h-1zM442 531h1v1h-1zM447 531h1v1h-1zM452 531h1v1h-1zM457 531h1v1h-1zM462 531h1v1h-1zM467 531h1v1h-1zM472 531h1v1h-1zM477 531h1v1h-1zM482 531h1v1h-1zM487 531h1v1h-1zM492 531h1v1h-1zM497 531h1v1h-1zM502 531h1v1h-1zM507 531h1v1h-1zM512 531h1v1h-1zM517 531h1v1h-1zM522 531h1v1h-1zM527 531h1v1h-1zM532 531h1v1h-1zM537 531h1v1h-1zM542 531h1v1h-1zM547 531h1v1h-1zM552 531h1v1h-1zM557 531h1v1h-1zM562 531h1v1h-1zM567 531h1v1h-1zM572 531h1v1h-1zM577 531h1v1h-1zM582 531h1v1h-1zM587 531h1v1h-1zM592 531h1v1h-1zM597 531h1v1h-1zM602 531h1v1h-1zM607 531h1v1h-1zM612 531h1v1h-1zM617 531h1v1h-1zM622 531h1v1h-1zM627 531h1v1h-1zM82 336h1v1h-1zM82 341h1v1h-1zM82 346h1v1h-1zM82 351h1v1h-1zM82 356h1v1h-1zM82 361h1v1h-1zM82 366h1v1h-1zM82 371h1v1h-1zM82 376h1v1h-1zM82 381h1v1h-1zM82 386h1v1h-1zM82 391h1v1h-1zM82 396h1v1h-1zM82 401h1v1h-1zM82 406h1v1h-1zM82 411h1v1h-1zM82 416h1v1h-1zM82 421h1v1h-1zM82 426h1v1h-1zM82 431h1v1h-1zM82 436h1v1h-1zM82 441h1v1h-1zM82 446h1v1h-1zM82 451h1v1h-1zM82 456h1v1h-1zM82 461h1v1h-1zM82 466h1v1h-1zM82 471h1v1h-1zM82 476h1v1h-1zM82 481h1v1h-1zM82 486h1v1h-1zM82 491h1v1h-1zM82 496h1v1h-1zM82 501h1v1h-1zM82 506h1v1h-1zM82 511h1v1h-1zM82 516h1v1h-1zM82 521h1v1h-1zM82 526h1v1h-1zM82 531h1v1h-1zM82 536h1v1h-1zM82 541h1v1h-1zM82 546h1v1h-1zM82 551h1v1h-1zM82 556h1v1h-1zM82 561h1v1h-1zM82 566h1v1h-1zM132 336h1v1h-1zM132 341h1v1h-1zM132 346h1v1h-1zM132 351h1v1h-1zM132 356h1v1h-1zM132 361h1v1h-1zM132 366h1v1h-1zM132 371h1v1h-1zM132 376h1v1h-1zM132 381h1v1h-1zM132 386h1v1h-1zM132 391h1v1h-1zM132 396h1v1h-1zM132 401h1v1h-1zM132 406h1v1h-1zM132 411h1v1h-1zM132 416h1v1h-1zM132 421h1v1h-1zM132 426h1v1h-1zM132 431h1v1h-1zM132 436h1v1h-1zM132 441h1v1h-1zM132 446h1v1h-1zM132 451h1v1h-1zM132 456h1v1h-1zM132 461h1v1h-1zM132 466h1v1h-1zM132 471h1v1h-1zM132 476h1v1h-1zM132 481h1v1h-1zM132 486h1v1h-1zM132 491h1v1h-1zM132 496h1v1h-1zM132 501h1v1h-1zM132 506h1v1h-1zM132 511h1v1h-1zM132 516h1v1h-1zM132 521h1v1h-1zM132 526h1v1h-1zM132 531h1v1h-1zM132 536h1v1h-1zM132 541h1v1h-1zM132 546h1v1h-1zM132 551h1v1h-1zM132 556h1v1h-1zM132 561h1v1h-1zM132 566h1v1h-1zM182 336h1v1h-1zM182 341h1v1h-1zM182 346h1v1h-1zM182 351h1v1h-1zM182 356h1v1h-1zM182 361h1v1h-1zM182 366h1v1h-1zM182 371h1v1h-1zM182 376h1v1h-1zM182 381h1v1h-1zM182 386h1v1h-1zM182 391h1v1h-1zM182 396h1v1h-1zM182 401h1v1h-1zM182 406h1v1h-1zM182 411h1v1h-1zM182 416h1v1h-1zM182 421h1v1h-1zM182 426h1v1h-1zM182 431h1v1h-1zM182 436h1v1h-1zM182 441h1v1h-1zM182 446h1v1h-1zM182 451h1v1h-1zM182 456h1v1h-1zM182 461h1v1h-1zM182 466h1v1h-1zM182 471h1v1h-1zM182 476h1v1h-1zM182 481h1v1h-1zM182 486h1v1h-1zM182 491h1v1h-1zM182 496h1v1h-1zM182 501h1v1h-1zM182 506h1v1h-1zM182 511h1v1h-1zM182 516h1v1h-1zM182 521h1v1h-1zM182 526h1v1h-1zM182 531h1v1h-1zM182 536h1v1h-1zM182 541h1v1h-1zM182 546h1v1h-1zM182 551h1v1h-1zM182 556h1v1h-1zM182 561h1v1h-1zM182 566h1v1h-1zM232 336h1v1h-1zM232 341h1v1h-1zM232 346h1v1h-1zM232 351h1v1h-1zM232 356h1v1h-1zM232 361h1v1h-1zM232 366h1v1h-1zM232 371h1v1h-1zM232 376h1v1h-1zM232 381h1v1h-1zM232 386h1v1h-1zM232 391h1v1h-1zM232 396h1v1h-1zM232 401h1v1h-1zM232 406h1v1h-1zM232 411h1v1h-1zM232 416h1v1h-1zM232 421h1v1h-1zM232 426h1v1h-1zM232 431h1v1h-1zM232 436h1v1h-1zM232 441h1v1h-1zM232 446h1v1h-1zM232 451h1v1h-1zM232 456h1v1h-1zM232 461h1v1h-1zM232 466h1v1h-1zM232 471h1v1h-1zM232 476h1v1h-1zM232 481h1v1h-1zM232 486h1v1h-1zM232 491h1v1h-1zM232 496h1v1h-1zM232 501h1v1h-1zM232 506h1v1h-1zM232 511h1v1h-1zM232 516h1v1h-1zM232 521h1v1h-1zM232 526h1v1h-1zM232 531h1v1h-1zM232 536h1v1h-1zM232 541h1v1h-1zM232 546h1v1h-1zM232 551h1v1h-1zM232 556h1v1h-1zM232 561h1v1h-1zM232 566h1v1h-1zM282 336h1v1h-1zM282 341h1v1h-1zM282 346h1v1h-1zM282 351h1v1h-1zM282 356h1v1h-1zM282 361h1v1h-1zM282 366h1v1h-1zM282 371h1v1h-1zM282 376h1v1h-1zM282 381h1v1h-1zM282 386h1v1h-1zM282 391h1v1h-1zM282 396h1v1h-1zM282 401h1v1h-1zM282 406h1v1h-1zM282 411h1v1h-1zM282 416h1v1h-1zM282 421h1v1h-1zM282 426h1v1h-1zM282 431h1v1h-1zM282 436h1v1h-1zM282 441h1v1h-1zM282 446h1v1h-1zM282 451h1v1h-1zM282 456h1v1h-1zM282 461h1v1h-1zM282 466h1v1h-1zM282 471h1v1h-1zM282 476h1v1h-1zM282 481h1v1h-1zM282 486h1v1h-1zM282 491h1v1h-1zM282 496h1v1h-1zM282 501h1v1h-1zM282 506h1v1h-1zM282 511h1v1h-1zM282 516h1v1h-1zM282 521h1v1h-1zM282 526h1v1h-1zM282 531h1v1h-1zM282 536h1v1h-1zM282 541h1v1h-1zM282 546h1v1h-1zM282 551h1v1h-1zM282 556h1v1h-1zM282 561h1v1h-1zM282 566h1v1h-1zM332 336h1v1h-1zM332 341h1v1h-1zM332 346h1v1h-1zM332 351h1v1h-1zM332 356h1v1h-1zM332 361h1v1h-1zM332 366h1v1h-1zM332 371h1v1h-1zM332 376h1v1h-1zM332 381h1v1h-1zM332 386h1v1h-1zM332 391h1v1h-1zM332 396h1v1h-1zM332 401h1v1h-1zM332 406h1v1h-1zM332 411h1v1h-1zM332 416h1v1h-1zM332 421h1v1h-1zM332 426h1v1h-1zM332 431h1v1h-1zM332 436h1v1h-1zM332 441h1v1h-1zM332 446h1v1h-1zM332 451h1v1h-1zM332 456h1v1h-1zM332 461h1v1h-1zM332 466h1v1h-1zM332 471h1v1h-1zM332 476h1v1h-1zM332 481h1v1h-1zM332 486h1v1h-1zM332 491h1v1h-1zM332 496h1v1h-1zM332 501h1v1h-1zM332 506h1v1h-1zM332 511h1v1h-1zM332 516h1v1h-1zM332 521h1v1h-1zM332 526h1v1h-1zM332 531h1v1h-1zM332 536h1v1h-1zM332 541h1v1h-1zM332 546h1v1h-1zM332 551h1v1h-1zM332 556h1v1h-1zM332 561h1v1h-1zM332 566h1v1h-1zM382 336h1v1h-1zM382 341h1v1h-1zM382 346h1v1h-1zM382 351h1v1h-1zM382 356h1v1h-1zM382 361h1v1h-1zM382 366h1v1h-1zM382 371h1v1h-1zM382 376h1v1h-1zM382 381h1v1h-1zM382 386h1v1h-1zM382 391h1v1h-1zM382 396h1v1h-1zM382 401h1v1h-1zM382 406h1v1h-1zM382 411h1v1h-1zM382 416h1v1h-1zM382 421h1v1h-1zM382 426h1v1h-1zM382 431h1v1h-1zM382 436h1v1h-1zM382 441h1v1h-1zM382 446h1v1h-1zM382 451h1v1h-1zM382 456h1v1h-1zM382 461h1v1h-1zM382 466h1v1h-1zM382 471h1v1h-1zM382 476h1v1h-1zM382 481h1v1h-1zM382 486h1v1h-1zM382 491h1v1h-1zM382 496h1v1h-1zM382 501h1v1h-1zM382 506h1v1h-1zM382 511h1v1h-1zM382 516h1v1h-1zM382 521h1v1h-1zM382 526h1v1h-1zM382 531h1v1h-1zM382 536h1v1h-1zM382 541h1v1h-1zM382 546h1v1h-1zM382 551h1v1h-1zM382 556h1v1h-1zM382 561h1v1h-1zM382 566h1v1h-1zM432 336h1v1h-1zM432 341h1v1h-1zM432 346h1v1h-1zM432 351h1v1h-1zM432 356h1v1h-1zM432 361h1v1h-1zM432 366h1v1h-1zM432 371h1v1h-1zM432 376h1v1h-1zM432 381h1v1h-1zM432 386h1v1h-1zM432 391h1v1h-1zM432 396h1v1h-1zM432 401h1v1h-1zM432 406h1v1h-1zM432 411h1v1h-1zM432 416h1v1h-1zM432 421h1v1h-1zM432 426h1v1h-1zM432 431h1v1h-1zM432 436h1v1h-1zM432 441h1v1h-1zM432 446h1v1h-1zM432 451h1v1h-1zM432 456h1v1h-1zM432 461h1v1h-1zM432 466h1v1h-1zM432 471h1v1h-1zM432 476h1v1h-1zM432 481h1v1h-1zM432 486h1v1h-1zM432 491h1v1h-1zM432 496h1v1h-1zM432 501h1v1h-1zM432 506h1v1h-1zM432 511h1v1h-1zM432 516h1v1h-1zM432 521h1v1h-1zM432 526h1v1h-1zM432 531h1v1h-1zM432 536h1v1h-1zM432 541h1v1h-1zM432 546h1v1h-1zM432 551h1v1h-1zM432 556h1v1h-1zM432 561h1v1h-1zM432 566h1v1h-1zM482 336h1v1h-1zM482 341h1v1h-1zM482 346h1v1h-1zM482 351h1v1h-1zM482 356h1v1h-1zM482 361h1v1h-1zM482 366h1v1h-1zM482 371h1v1h-1zM482 376h1v1h-1zM482 381h1v1h-1zM482 386h1v1h-1zM482 391h1v1h-1zM482 396h1v1h-1zM482 401h1v1h-1zM482 406h1v1h-1zM482 411h1v1h-1zM482 416h1v1h-1zM482 421h1v1h-1zM482 426h1v1h-1zM482 431h1v1h-1zM482 436h1v1h-1zM482 441h1v1h-1zM482 446h1v1h-1zM482 451h1v1h-1zM482 456h1v1h-1zM482 461h1v1h-1zM482 466h1v1h-1zM482 471h1v1h-1zM482 476h1v1h-1zM482 481h1v1h-1zM482 486h1v1h-1zM482 491h1v1h-1zM482 496h1v1h-1zM482 501h1v1h-1zM482 506h1v1h-1zM482 511h1v1h-1zM482 516h1v1h-1zM482 521h1v1h-1zM482 526h1v1h-1zM482 531h1v1h-1zM482 536h1v1h-1zM482 541h1v1h-1zM482 546h1v1h-1zM482 551h1v1h-1zM482 556h1v1h-1zM482 561h1v1h-1zM482 566h1v1h-1zM532 336h1v1h-1zM532 341h1v1h-1zM532 346h1v1h-1zM532 351h1v1h-1zM532 356h1v1h-1zM532 361h1v1h-1zM532 366h1v1h-1zM532 371h1v1h-1zM532 376h1v1h-1zM532 381h1v1h-1zM532 386h1v1h-1zM532 391h1v1h-1zM532 396h1v1h-1zM532 401h1v1h-1zM532 406h1v1h-1zM532 411h1v1h-1zM532 416h1v1h-1zM532 421h1v1h-1zM532 426h1v1h-1zM532 431h1v1h-1zM532 436h1v1h-1zM532 441h1v1h-1zM532 446h1v1h-1zM532 451h1v1h-1zM532 456h1v1h-1zM532 461h1v1h-1zM532 466h1v1h-1zM532 471h1v1h-1zM532 476h1v1h-1zM532 481h1v1h-1zM532 486h1v1h-1zM532 491h1v1h-1zM532 496h1v1h-1zM532 501h1v1h-1zM532 506h1v1h-1zM532 511h1v1h-1zM532 516h1v1h-1zM532 521h1v1h-1zM532 526h1v1h-1zM532 531h1v1h-1zM532 536h1v1h-1zM532 541h1v1h-1zM532 546h1v1h-1zM532 551h1v1h-1zM532 556h1v1h-1zM532 561h1v1h-1zM532 566h1v1h-1zM582 336h1v1h-1zM582 341h1v1h-1zM582 346h1v1h-1zM582 351h1v1h-1zM582 356h1v1h-1zM582 361h1v1h-1zM582 366h1v1h-1zM582 371h1v1h-1zM582 376h1v1h-1zM582 381h1v1h-1zM582 386h1v1h-1zM582 391h1v1h-1zM582 396h1v1h-1zM582 401h1v1h-1zM582 406h1v1h-1zM582 411h1v1h-1zM582 416h1v1h-1zM582 421h1v1h-1zM582 426h1v1h-1zM582 431h1v1h-1zM582 436h1v1h-1zM582 441h1v1h-1zM582 446h1v1h-1zM582 451h1v1h-1zM582 456h1v1h-1zM582 461h1v1h-1zM582 466h1v1h-1zM582 471h1v1h-1zM582 476h1v1h-1zM582 481h1v1h-1zM582 486h1v1h-1zM582 491h1v1h-1zM582 496h1v1h-1zM582 501h1v1h-1zM582 506h1v1h-1zM582 511h1v1h-1zM582 516h1v1h-1zM582 521h1v1h-1zM582 526h1v1h-1zM582 531h1v1h-1zM582 536h1v1h-1zM582 541h1v1h-1zM582 546h1v1h-1zM582 551h1v1h-1zM582 556h1v1h-1zM582 561h1v1h-1zM582 566h1v1h-1z"/><path fill="#ff0080" d="M33 451h599v1h-599zM35 450h4v1h-4zM53 450h4v1h-4zM85 450h4v1h-4zM162 450h4v1h-4zM210 450h4v1h-4zM235 450h4v1h-4zM256 450h4v1h-4zM261 450h4v1h-4zM310 450h4v1h-4zM316 450h4v1h-4zM341 450h4v1h-4zM391 450h4v1h-4zM399 450h4v1h-4zM473 450h4v1h-4zM519 450h4v1h-4zM535 450h4v1h-4zM578 450h4v1h-4zM616 450h4v1h-4zM622 450h4v1h-4zM48 452h1v1h-1zM66 452h1v1h-1zM72 452h1v1h-1zM91 452h1v1h-1zM98 452h1v1h-1zM123 452h1v1h-1zM129 452h1v1h-1zM153 452h1v1h-1zM228 452h1v1h-1zM253 452h1v1h-1zM329 452h1v1h-1zM355 452h1v1h-1zM372 452h1v1h-1zM425 452h1v1h-1zM498 452h1v1h-1zM500 452h1v1h-1zM503 452h1v1h-1zM510 452h1v1h-1z"/><path fill="#ff0000" d="M33 503h1v3h-1zM34 505h1v2h-1zM35 506h1v3h-1zM36 508h1v2h-1zM37 509h1v3h-1zM38 511h1v2h-1zM39 512h1v3h-1zM40 514h1v2h-1zM41 515h1v3h-1zM42 517h1v2h-1zM43 518h1v2h-1zM44 519h1v2h-1zM45 520h1v2h-1zM46 521h1v2h-1zM47 522h1v2h-1zM48 523h1v2h-1zM49 524h1v2h-1zM50 525h1v1h-1zM51 525h1v2h-1zM52 526h1v2h-1zM53 527h1v1h-1zM54 527h1v1h-1zM55 527h1v2h-1zM56 528h1v1h-1zM57 528h1v1h-1zM58 528h1v1h-1zM59 528h1v1h-1zM60 528h1v1h-1zM61 528h1v1h-1zM62 528h1v1h-1zM63 528h1v1h-1zM64 528h1v1h-1zM65 527h1v2h-1zM66 527h1v1h-1zM67 526h1v2h-1zM68 526h1v1h-1zM69 525h1v2h-1zM70 524h1v2h-1zM71 524h1v1h-1zM72 523h1v2h-1zM73 522h1v2h-1zM74 521h1v2h-1zM75 520h1v2h-1zM76 519h1v2h-1zM77 517h1v3h-1zM78 516h1v2h-1zM79 515h1v2h-1zM80 513h1v3h-1zM81 512h1v2h-1zM82 511h1v2h-1zM83 509h1v3h-1zM84 507h1v3h-1zM85 506h1v2h-1zM86 504h1v3h-1zM87 502h1v3h-1zM88 500h1v3h-1zM89 499h1v2h-1zM90 497h1v3h-1zM91 495h1v3h-1zM92 493h1v3h-1zM93 491h1v3h-1zM94 489h1v3h-1zM95 487h1v3h-1zM96 485h1v3h-1zM97 482h1v4h-1zM98 480h1v3h-1zM99 478h1v3h-1zM100 476h1v3h-1zM101 473h1v4h-1zM102 471h1v3h-1zM103 469h1v3h-1zM104 467h1v3h-1zM105 464h1v4h-1zM106 462h1v3h-1zM107 460h1v3h-1zM108 457h1v4h-1zM109 455h1v3h-1zM110 452h1v4h-1zM111 450h1v3h-1zM112 448h1v3h-1zM113 445h1v4h-1zM114 443h1v3h-1zM115 441h1v3h-1zM116 438h1v4h-1zM117 436h1v3h-1zM118 434h1v3h-1zM119 431h1v4h-1zM120 429h1v3h-1zM121 427h1v3h-1zM122 424h1v4h-1zM123 422h1v3h-1zM124 420h1v3h-1zM125 418h1v3h-1zM126 416h1v3h-1zM127 414h1v3h-1zM128 412h1v3h-1zM129 410h1v3h-1zM130 408h1v3h-1zM131 406h1v3h-1zM132 404h1v3h-1zM133 402h1v3h-1zM134 400h1v3h-1zM135 398h1v3h-1zM136 397h1v2h-1zM137 395h1v3h-1zM138 393h1v3h-1zM139 392h1v2h-1zM140 390h1v3h-1zM141 389h1v2h-1zM142 387h1v3h-1zM143 386h1v2h-1zM144 385h1v2h-1zM145 384h1v2h-1zM146 382h1v3h-1zM147 381h1v2h-1zM148 380h1v2h-1zM149 379h1v2h-1zM150 379h1v1h-1zM151 378h1v2h-1zM152 377h1v2h-1zM153 376h1v2h-1zM154 376h1v1h-1zM155 375h1v2h-1zM156 375h1v1h-1zM157 374h1v2h-1zM158 374h1v1h-1zM159 374h1v1h-1zM160 374h1v1h-1zM161 374h1v1h-1zM162 374h1v1h-1zM163 374h1v1h-1zM164 374h1v1h-1zM165 374h1v1h-1zM166 374h1v1h-1zM167 374h1v1h-1zM168 374h1v2h-1zM169 375h1v1h-1zM170 375h1v2h-1zM171 376h1v2h-1zM172 377h1v1h-1zM173 377h1v2h-1zM174 378h1v2h-1zM175 379h1v2h-1zM176 380h1v2h-1zM177 381h1v2h-1zM178 382h1v2h-1zM179 383h1v2h-1zM180 384h1v2h-1zM181 385h1v2h-1zM182 386h1v3h-1zM183 388h1v2h-1zM184 389h1v3h-1zM185 391h1v2h-1zM186 392h1v3h-1zM187 394h1v2h-1zM188 395h1v3h-1zM189 397h1v3h-1zM190 399h1v3h-1zM191 401h1v2h-1zM192 402h1v3h-1zM193 404h1v3h-1zM194 406h1v3h-1zM195 408h1v3h-1zM196 410h1v3h-1zM197 412h1v3h-1zM198 414h1v3h-1zM199 416h1v4h-1zM200 419h1v3h-1zM201 421h1v3h-1zM202 423h1v3h-1zM203 425h1v3h-1zM204 427h1v4h-1zM205 430h1v3h-1zM206 432h1v3h-1zM207 434h1v4h-1zM208 437h1v3h-1zM209 439h1v3h-1zM210 441h1v4h-1zM211 444h1v3h-1zM212 446h1v3h-1zM213 448h1v4h-1zM214 451h1v3h-1zM215 453h1v4h-1zM216 456h1v3h-1zM217 458h1v3h-1zM218 460h1v4h-1zM219 463h1v3h-1zM220 465h1v3h-1zM221 467h1v4h-1zM222 470h1v3h-1zM223 472h1v3h-1zM224 474h1v3h-1zM225 476h1v4h-1zM226 479h1v3h-1zM227 481h1v3h-1zM228 483h1v3h-1zM229 485h1v3h-1zM230 487h1v3h-1zM231 489h1v3h-1zM232 491h1v3h-1zM233 493h1v3h-1zM234 495h1v3h-1zM235 497h1v3h-1zM236 499h1v3h-1zM237 501h1v3h-1zM238 503h1v3h-1zM239 505h1v2h-1zM240 506h1v3h-1zM241 508h1v2h-1zM242 509h1v3h-1zM243 511h1v2h-1zM244 512h1v3h-1zM245 514h1v2h-1zM246 515h1v3h-1zM247 517h1v2h-1zM248 518h1v2h-1zM249 519h1v2h-1zM250 520h1v2h-1zM251 521h1v2h-1zM252 522h1v2h-1zM253 523h1v2h-1zM254 524h1v2h-1zM255 525h1v1h-1zM256 525h1v2h-1zM257 526h1v2h-1zM258 527h1v1h-1zM259 527h1v1h-1zM260 527h1v2h-1zM261 528h1v1h-1zM262 528h1v1h-1zM263 528h1v1h-1zM264 528h1v1h-1zM265 528h1v1h-1zM266 528h1v1h-1zM267 528h1v1h-1zM268 528h1v1h-1zM269 528h1v1h-1zM270 527h1v2h-1zM271 527h1v1h-1zM272 526h1v2h-1zM273 526h1v1h-1zM274 525h1v2h-1zM275 524h1v2h-1zM276 524h1v1h-1zM277 523h1v2h-1zM278 522h1v2h-1zM279 521h1v2h-1zM280 520h1v2h-1zM281 519h1v2h-1zM282 517h1v3h-1zM283 516h1v2h-1zM284 515h1v2h-1zM285 513h1v3h-1zM286 512h1v2h-1zM287 511h1v2h-1zM288 509h1v3h-1zM289 507h1v3h-1zM290 506h1v2h-1zM291 504h1v3h-1zM292 502h1v3h-1zM293 500h1v3h-1zM294 499h1v2h-1zM295 497h1v3h-1zM296 495h1v3h-1zM297 493h1v3h-1zM298 491h1v3h-1zM299 489h1v3h-1zM300 487h1v3h-1zM301 485h1v3h-1zM302 482h1v4h-1zM303 480h1v3h-1zM304 478h1v3h-1zM305 476h1v3h-1zM306 473h1v4h-1zM307 471h1v3h-1zM308 469h1v3h-1zM309 467h1v3h-1zM310 464h1v4h-1zM311 462h1v3h-1zM312 460h1v3h-1zM313 457h1v4h-1zM314 455h1v3h-1zM315 452h1v4h-1zM316 450h1v3h-1zM317 448h1v3h-1zM318 445h1v4h-1zM319 443h1v3h-1zM320 441h1v3h-1zM321 438h1v4h-1zM322 436h1v3h-1zM323 434h1v3h-1zM324 431h1v4h-1zM325 429h1v3h-1zM326 427h1v3h-1zM327 424h1v4h-1zM328 422h1v3h-1zM329 420h1v3h-1zM330 418h1v3h-1zM331 416h1v3h-1zM332 414h1v3h-1zM333 412h1v3h-1zM334 410h1v3h-1zM335 408h1v3h-1zM336 406h1v3h-1zM337 404h1v3h-1zM338 402h1v3h-1zM339 400h1v3h-1zM340 398h1v3h-1zM341 397h1v2h-1zM342 395h1v3h-1zM343 393h1v3h-1zM344 392h1v2h-1zM345 390h1v3h-1zM346 389h1v2h-1zM347 387h1v3h-1zM348 386h1v2h-1zM349 385h1v2h-1zM350 384h1v2h-1zM351 382h1v3h-1zM352 381h1v2h-1zM353 380h1v2h-1zM354 379h1v2h-1zM355 379h1v1h-1zM356 378h1v2h-1zM357 377h1v2h-1zM358 376h1v2h-1zM359 376h1v1h-1zM360 375h1v2h-1zM361 375h1v1h-1zM362 374h1v2h-1zM363 374h1v1h-1zM364 374h1v1h-1zM365 374h1v1h-1zM366 374h1v1h-1zM367 374h1v1h-1zM368 374h1v1h-1zM369 374h1v1h-1zM370 374h1v1h-1zM371 374h1v1h-1zM372 374h1v1h-1zM373 374h1v2h-1zM374 375h1v1h-1zM375 375h1v2h-1zM376 376h1v2h-1zM377 377h1v1h-1zM378 377h1v2h-1zM379 378h1v2h-1zM380 379h1v2h-1zM381 380h1v2h-1zM382 381h1v2h-1zM383 382h1v2h-1zM384 383h1v2h-1zM385 384h1v2h-1zM386 385h1v2h-1zM387 386h1v3h-1zM388 388h1v2h-1zM389 389h1v3h-1zM390 391h1v2h-1zM391 392h1v3h-1zM392 394h1v2h-1zM393 395h1v3h-1zM394 397h1v3h-1zM395 399h1v3h-1zM396 401h1v2h-1zM397 402h1v3h-1zM398 404h1v3h-1zM399 406h1v3h-1zM400 408h1v3h-1zM401 410h1v3h-1zM402 412h1v3h-1zM403 414h1v3h-1zM404 416h1v4h-1zM405 419h1v3h-1zM406 421h1v3h-1zM407 423h1v3h-1zM408 425h1v3h-1zM409 427h1v4h-1zM410 430h1v3h-1zM411 432h1v3h-1zM412 434h1v4h-1zM413 437h1v3h-1zM414 439h1v3h-1zM415 441h1v4h-1zM416 444h1v3h-1zM417 446h1v3h-1zM418 448h1v4h-1zM419 451h1v3h-1zM420 453h1v4h-1zM421 456h1v3h-1zM422 458h1v3h-1zM423 460h1v4h-1zM424 463h1v3h-1zM425 465h1v3h-1zM426 467h1v4h-1zM427 470h1v3h-1zM428 472h1v3h-1zM429 474h1v3h-1zM430 476h1v4h-1zM431 479h1v3h-1zM432 481h1v3h-1zM433 483h1v3h-1zM434 485h1v3h-1zM435 487h1v3h-1zM436 489h1v3h-1zM437 491h1v3h-1zM438 493h1v3h-1zM439 495h1v3h-1zM440 497h1v3h-1zM441 499h1v3h-1zM442 501h1v3h-1zM443 503h1v3h-1zM444 505h1v2h-1zM445 506h1v3h-1zM446 508h1v2h-1zM447 509h1v3h-1zM448 511h1v2h-1zM449 512h1v3h-1zM450 514h1v2h-1zM451 515h1v3h-1zM452 517h1v2h-1zM453 518h1v2h-1zM454 519h1v2h-1zM455 520h1v2h-1zM456 521h1v2h-1zM457 522h1v2h-1zM458 523h1v2h-1zM459 524h1v2h-1zM460 525h1v1h-1zM461 525h1v2h-1zM462 526h1v2h-1zM463 527h1v1h-1zM464 527h1v1h-1zM465 527h1v2h-1zM466 528h1v1h-1zM467 528h1v1h-1zM468 528h1v1h-1zM469 528h1v1h-1zM470 528h1v1h-1zM471 528h1v1h-1zM472 528h1v1h-1zM473 528h1v1h-1zM474 528h1v1h-1zM475 527h1v2h-1zM476 527h1v1h-1zM477 526h1v2h-1zM478 526h1v1h-1zM479 525h1v2h-1zM480 524h1v2h-1zM481 524h1v1h-1zM482 523h1v2h-1zM483 522h1v2h-1zM484 521h1v2h-1zM485 520h1v2h-1zM486 519h1v2h-1zM487 517h1v3h-1zM488 516h1v2h-1zM489 515h1v2h-1zM490 513h1v3h-1zM491 512h1v2h-1zM492 511h1v2h-1zM493 509h1v3h-1zM494 507h1v3h-1zM495 506h1v2h-1zM496 504h1v3h-1zM497 502h1v3h-1zM498 500h1v3h-1zM499 499h1v2h-1zM500 497h1v3h-1zM501 495h1v3h-1zM502 493h1v3h-1zM503 491h1v3h-1zM504 489h1v3h-1zM505 487h1v3h-1zM506 485h1v3h-1zM507 482h1v4h-1zM508 480h1v3h-1zM509 478h1v3h-1zM510 476h1v3h-1zM511 473h1v4h-1zM512 471h1v3h-1zM513 469h1v3h-1zM514 467h1v3h-1zM515 464h1v4h-1zM516 462h1v3h-1zM517 460h1v3h-1zM518 457h1v4h-1zM519 455h1v3h-1zM520 452h1v4h-1zM521 450h1v3h-1zM522 448h1v3h-1zM523 445h1v4h-1zM524 443h1v3h-1zM525 441h1v3h-1zM526 438h1v4h-1zM527 436h1v3h-1zM528 434h1v3h-1zM529 431h1v4h-1zM530 429h1v3h-1zM531 427h1v3h-1zM532 424h1v4h-1zM533 422h1v3h-1zM534 420h1v3h-1zM535 418h1v3h-1zM536 416h1v3h-1zM537 414h1v3h-1zM538 412h1v3h-1zM539 410h1v3h-1zM540 408h1v3h-1zM541 406h1v3h-1zM542 404h1v3h-1zM543 402h1v3h-1zM544 400h1v3h-1zM545 398h1v3h-1zM546 397h1v2h-1zM547 395h1v3h-1zM548 393h1v3h-1zM549 392h1v2h-1zM550 390h1v3h-1zM551 389h1v2h-1zM552 387h1v3h-1zM553 386h1v2h-1zM554 385h1v2h-1zM555 384h1v2h-1zM556 382h1v3h-1zM557 381h1v2h-1zM558 380h1v2h-1zM559 379h1v2h-1zM560 379h1v1h-1zM561 378h1v2h-1zM562 377h1v2h-1zM563 376h1v2h-1zM564 376h1v1h-1zM565 375h1v2h-1zM566 375h1v1h-1zM567 374h1v2h-1zM568 374h1v1h-1zM569 374h1v1h-1zM570 374h1v1h-1zM571 374h1v1h-1zM572 374h1v1h-1zM573 374h1v1h-1zM574 374h1v1h-1zM575 374h1v1h-1zM576 374h1v1h-1zM577 374h1v1h-1zM578 374h1v2h-1zM579 375h1v1h-1zM580 375h1v2h-1zM581 376h1v2h-1zM582 377h1v1h-1zM583 377h1v2h-1zM584 378h1v2h-1zM585 379h1v2h-1zM586 380h1v2h-1zM587 381h1v2h-1zM588 382h1v2h-1zM589 383h1v2h-1zM590 384h1v2h-1zM591 385h1v2h-1zM592 386h1v3h-1zM593 388h1v2h-1zM594 389h1v3h-1zM595 391h1v2h-1zM596 392h1v3h-1zM597 394h1v2h-1zM598 395h1v3h-1zM599 397h1v3h-1zM600 399h1v3h-1zM601 401h1v2h-1zM602 402h1v3h-1zM603 404h1v3h-1zM604 406h1v3h-1zM605 408h1v3h-1zM606 410h1v3h-1zM607 412h1v3h-1zM608 414h1v3h-1zM609 416h1v4h-1zM610 419h1v3h-1zM611 421h1v3h-1zM612 423h1v3h-1zM613 425h1v3h-1zM614 427h1v4h-1zM615 430h1v3h-1zM616 432h1v3h-1zM617 434h1v4h-1zM618 437h1v3h-1zM619 439h1v3h-1zM620 441h1v4h-1zM621 444h1v3h-1zM622 446h1v3h-1zM623 448h1v4h-1zM624 451h1v3h-1zM625 453h1v4h-1zM626 456h1v3h-1zM627 458h1v3h-1zM628 460h1v4h-1zM629 463h1v3h-1zM630 465h1v3h-1z"/><path fill="#b0a0d8" d="M26 451h6v1h-6zM26 451h1v6h-1zM23 457h7l-3.5 5z"/></svg><div class="a s12" style="left:34px;top:334px;color:#ff0000;">+U1:</div><div class="a s12" style="left:65px;top:334px;color:#ff0000;">11.250</div><div class="a s12" style="left:106px;top:334px;color:#ff0000;">V</div><div class="a s12" style="left:113px;top:334px;color:#ff0080;">+I1:</div><div class="a s12" style="left:141px;top:334px;color:#ff0080;">600.00mA</div><div class="a s12" style="left:33px;top:560px;color:#ff0000;">-U1:</div><div class="a s12" style="left:65px;top:560px;color:#ff0000;">11.250</div><div class="a s12" style="left:106px;top:560px;color:#ff0000;">V</div><div class="a s12" style="left:113px;top:560px;color:#ff0080;">-I1:</div><div class="a s12" style="left:141px;top:560px;color:#ff0080;">600.00mA</div><div class="a s12" style="left:58px;top:560px;color:#ff0000;">-</div><div class="a s12" style="left:136px;top:560px;color:#ff0080;">-</div><svg class="a" style="left:0;top:0" width="800" height="600"><path fill="#fff" d="M537 565h1v1h-1zM538 564h1v1h-1zM539 564h1v1h-1zM540 563h1v1h-1zM541 563h1v1h-1zM542 562h1v1h-1zM543 562h1v1h-1zM538 566h1v1h-1zM539 566h1v1h-1zM540 567h1v1h-1zM541 567h1v1h-1zM542 568h1v1h-1zM543 568h1v1h-1zM546 565h1v1h-1zM547 564h1v1h-1zM548 564h1v1h-1zM549 563h1v1h-1zM550 563h1v1h-1zM551 562h1v1h-1zM552 562h1v1h-1zM547 566h1v1h-1zM548 566h1v1h-1zM549 567h1v1h-1zM550 567h1v1h-1zM551 568h1v1h-1zM552 568h1v1h-1zM617 565h1v1h-1zM616 564h1v1h-1zM615 564h1v1h-1zM614 563h1v1h-1zM613 563h1v1h-1zM612 562h1v1h-1zM611 562h1v1h-1zM616 566h1v1h-1zM615 566h1v1h-1zM614 567h1v1h-1zM613 567h1v1h-1zM612 568h1v1h-1zM611 568h1v1h-1zM626 565h1v1h-1zM625 564h1v1h-1zM624 564h1v1h-1zM623 563h1v1h-1zM622 563h1v1h-1zM621 562h1v1h-1zM620 562h1v1h-1zM625 566h1v1h-1zM624 566h1v1h-1zM623 567h1v1h-1zM622 567h1v1h-1zM621 568h1v1h-1zM620 568h1v1h-1z"/></svg><div class="a s13" style="left:559px;top:559px;color:#ffffff;">5 ms/div</div><div class="a s14" style="left:3px;top:585px;color:#ffffff;">Update</div><div class="a s14" style="left:71px;top:585px;color:#ffffff;">32 (</div><div class="a s14" style="left:105px;top:585px;color:#ffffff;">1s</div><div class="a s14" style="left:126px;top:585px;color:#ffffff;">) 204796 Sum</div><div class="a s14" style="left:517px;top:585px;color:#ffffff;">2021/11/25</div><div class="a s14" style="left:589px;top:585px;color:#ffffff;letter-spacing:-0.8px">10:47:06</div><svg class="a" style="left:0;top:0" width="800" height="600" shape-rendering="crispEdges"><path fill="#ffffff" aria-label="常规测量" d="M10 5h1v1h-1zM5 6h2v1h-2zM10 6h1v1h-1zM14 6h2v1h-2zM22 6h1v1h-1zM26 6h7v1h-7zM36 6h2v1h-2zM39 6h6v1h-6zM49 6h1v1h-1zM53 6h11v1h-11zM6 7h1v1h-1zM10 7h1v1h-1zM14 7h1v1h-1zM22 7h1v1h-1zM26 7h1v1h-1zM32 7h1v1h-1zM37 7h3v1h-3zM44 7h1v1h-1zM49 7h1v1h-1zM53 7h1v1h-1zM63 7h1v1h-1zM4 8h14v1h-14zM19 8h6v1h-6zM26 8h1v1h-1zM32 8h1v1h-1zM39 8h1v1h-1zM44 8h1v1h-1zM49 8h1v1h-1zM53 8h11v1h-11zM4 9h1v1h-1zM17 9h1v1h-1zM22 9h1v1h-1zM26 9h1v1h-1zM29 9h1v1h-1zM32 9h1v1h-1zM39 9h1v1h-1zM44 9h1v1h-1zM49 9h1v1h-1zM53 9h11v1h-11zM4 10h1v1h-1zM6 10h9v1h-9zM17 10h1v1h-1zM22 10h1v1h-1zM26 10h1v1h-1zM29 10h1v1h-1zM32 10h1v1h-1zM35 10h1v1h-1zM39 10h1v1h-1zM44 10h1v1h-1zM49 10h1v1h-1zM4 11h1v1h-1zM6 11h1v1h-1zM14 11h1v1h-1zM17 11h1v1h-1zM22 11h1v1h-1zM26 11h1v1h-1zM29 11h1v1h-1zM32 11h1v1h-1zM35 11h2v1h-2zM39 11h1v1h-1zM44 11h1v1h-1zM49 11h1v1h-1zM51 11h15v1h-15zM6 12h1v1h-1zM14 12h1v1h-1zM22 12h1v1h-1zM26 12h1v1h-1zM29 12h1v1h-1zM32 12h1v1h-1zM37 12h1v1h-1zM39 12h1v1h-1zM44 12h1v1h-1zM49 12h1v1h-1zM6 13h9v1h-9zM19 13h6v1h-6zM26 13h1v1h-1zM29 13h1v1h-1zM32 13h1v1h-1zM39 13h1v1h-1zM44 13h1v1h-1zM49 13h1v1h-1zM53 13h12v1h-12zM10 14h1v1h-1zM22 14h1v1h-1zM26 14h1v1h-1zM29 14h1v1h-1zM32 14h1v1h-1zM39 14h1v1h-1zM44 14h1v1h-1zM49 14h1v1h-1zM53 14h1v1h-1zM58 14h1v1h-1zM64 14h1v1h-1zM10 15h1v1h-1zM21 15h2v1h-2zM26 15h1v1h-1zM29 15h1v1h-1zM32 15h1v1h-1zM39 15h1v1h-1zM44 15h1v1h-1zM49 15h1v1h-1zM53 15h12v1h-12zM5 16h12v1h-12zM21 16h1v1h-1zM23 16h1v1h-1zM28 16h3v1h-3zM37 16h1v1h-1zM39 16h1v1h-1zM41 16h1v1h-1zM44 16h1v1h-1zM49 16h1v1h-1zM53 16h12v1h-12zM5 17h1v1h-1zM10 17h1v1h-1zM16 17h1v1h-1zM21 17h1v1h-1zM23 17h2v1h-2zM28 17h1v1h-1zM30 17h1v1h-1zM37 17h1v1h-1zM41 17h1v1h-1zM49 17h1v1h-1zM58 17h1v1h-1zM5 18h1v1h-1zM10 18h1v1h-1zM16 18h1v1h-1zM20 18h1v1h-1zM24 18h1v1h-1zM27 18h1v1h-1zM30 18h1v1h-1zM33 18h1v1h-1zM36 18h1v1h-1zM41 18h1v1h-1zM49 18h1v1h-1zM52 18h13v1h-13zM5 19h1v1h-1zM10 19h1v1h-1zM15 19h2v1h-2zM20 19h1v1h-1zM26 19h2v1h-2zM30 19h1v1h-1zM33 19h1v1h-1zM36 19h1v1h-1zM40 19h1v1h-1zM43 19h1v1h-1zM49 19h1v1h-1zM58 19h1v1h-1zM10 20h1v1h-1zM13 20h3v1h-3zM19 20h1v1h-1zM25 20h2v1h-2zM30 20h4v1h-4zM35 20h1v1h-1zM39 20h1v1h-1zM44 20h1v1h-1zM49 20h1v1h-1zM51 20h15v1h-15zM10 21h1v1h-1zM47 21h2v1h-2z"/><path fill="#ffffff" aria-label="峰值超限" d="M245 4h1v1h-1zM261 4h1v1h-1zM271 4h1v1h-1zM238 5h1v1h-1zM244 5h2v1h-2zM255 5h1v1h-1zM261 5h1v1h-1zM271 5h1v1h-1zM275 5h8v1h-8zM285 5h4v1h-4zM291 5h7v1h-7zM238 6h1v1h-1zM244 6h6v1h-6zM255 6h1v1h-1zM257 6h10v1h-10zM271 6h1v1h-1zM278 6h1v1h-1zM282 6h1v1h-1zM285 6h1v1h-1zM288 6h1v1h-1zM290 6h1v1h-1zM297 6h1v1h-1zM238 7h1v1h-1zM243 7h2v1h-2zM248 7h1v1h-1zM254 7h1v1h-1zM261 7h1v1h-1zM268 7h7v1h-7zM278 7h1v1h-1zM282 7h1v1h-1zM285 7h1v1h-1zM288 7h1v1h-1zM290 7h1v1h-1zM297 7h1v1h-1zM236 8h1v1h-1zM238 8h1v1h-1zM240 8h1v1h-1zM242 8h1v1h-1zM245 8h1v1h-1zM247 8h2v1h-2zM254 8h1v1h-1zM260 8h1v1h-1zM271 8h1v1h-1zM277 8h1v1h-1zM282 8h1v1h-1zM285 8h1v1h-1zM287 8h1v1h-1zM290 8h8v1h-8zM236 9h1v1h-1zM238 9h1v1h-1zM240 9h1v1h-1zM245 9h3v1h-3zM253 9h2v1h-2zM257 9h9v1h-9zM271 9h1v1h-1zM277 9h1v1h-1zM281 9h1v1h-1zM285 9h1v1h-1zM287 9h1v1h-1zM290 9h1v1h-1zM297 9h1v1h-1zM236 10h1v1h-1zM238 10h1v1h-1zM240 10h1v1h-1zM245 10h3v1h-3zM252 10h3v1h-3zM257 10h1v1h-1zM265 10h1v1h-1zM268 10h7v1h-7zM276 10h1v1h-1zM279 10h3v1h-3zM285 10h1v1h-1zM287 10h1v1h-1zM290 10h1v1h-1zM297 10h1v1h-1zM236 11h1v1h-1zM238 11h1v1h-1zM240 11h1v1h-1zM243 11h2v1h-2zM248 11h2v1h-2zM252 11h1v1h-1zM254 11h1v1h-1zM257 11h9v1h-9zM271 11h1v1h-1zM275 11h1v1h-1zM285 11h1v1h-1zM288 11h1v1h-1zM290 11h1v1h-1zM297 11h1v1h-1zM236 12h1v1h-1zM238 12h1v1h-1zM240 12h1v1h-1zM242 12h1v1h-1zM246 12h1v1h-1zM250 12h1v1h-1zM254 12h1v1h-1zM257 12h1v1h-1zM265 12h1v1h-1zM271 12h1v1h-1zM276 12h6v1h-6zM285 12h1v1h-1zM288 12h1v1h-1zM290 12h8v1h-8zM236 13h1v1h-1zM238 13h1v1h-1zM240 13h1v1h-1zM243 13h7v1h-7zM254 13h1v1h-1zM257 13h1v1h-1zM265 13h1v1h-1zM269 13h1v1h-1zM271 13h1v1h-1zM276 13h1v1h-1zM281 13h1v1h-1zM285 13h1v1h-1zM288 13h1v1h-1zM290 13h1v1h-1zM293 13h2v1h-2zM236 14h1v1h-1zM238 14h1v1h-1zM240 14h1v1h-1zM246 14h1v1h-1zM254 14h1v1h-1zM257 14h9v1h-9zM269 14h1v1h-1zM271 14h4v1h-4zM276 14h1v1h-1zM281 14h1v1h-1zM285 14h1v1h-1zM288 14h1v1h-1zM290 14h1v1h-1zM294 14h1v1h-1zM297 14h1v1h-1zM236 15h1v1h-1zM238 15h1v1h-1zM240 15h1v1h-1zM243 15h7v1h-7zM254 15h1v1h-1zM257 15h1v1h-1zM265 15h1v1h-1zM269 15h1v1h-1zM271 15h1v1h-1zM276 15h1v1h-1zM281 15h1v1h-1zM285 15h1v1h-1zM287 15h2v1h-2zM290 15h1v1h-1zM294 15h3v1h-3zM236 16h1v1h-1zM238 16h1v1h-1zM240 16h1v1h-1zM246 16h1v1h-1zM254 16h1v1h-1zM257 16h1v1h-1zM265 16h1v1h-1zM269 16h1v1h-1zM271 16h1v1h-1zM276 16h1v1h-1zM281 16h1v1h-1zM285 16h1v1h-1zM290 16h1v1h-1zM295 16h1v1h-1zM236 17h5v1h-5zM242 17h9v1h-9zM254 17h1v1h-1zM257 17h9v1h-9zM268 17h4v1h-4zM276 17h6v1h-6zM285 17h1v1h-1zM290 17h1v1h-1zM295 17h2v1h-2zM237 18h1v1h-1zM240 18h1v1h-1zM246 18h1v1h-1zM254 18h1v1h-1zM257 18h1v1h-1zM265 18h1v1h-1zM268 18h1v1h-1zM270 18h2v1h-2zM285 18h1v1h-1zM290 18h1v1h-1zM293 18h2v1h-2zM296 18h2v1h-2zM246 19h1v1h-1zM254 19h1v1h-1zM256 19h11v1h-11zM268 19h1v1h-1zM272 19h11v1h-11zM285 19h1v1h-1zM290 19h4v1h-4zM297 19h2v1h-2zM246 20h1v1h-1zM254 20h1v1h-1z"/><path fill="#ffffff" aria-label="积" d="M345 6h3v1h-3zM342 7h4v1h-4zM349 7h8v1h-8zM345 8h1v1h-1zM349 8h1v1h-1zM356 8h1v1h-1zM345 9h1v1h-1zM349 9h1v1h-1zM356 9h1v1h-1zM342 10h8v1h-8zM356 10h1v1h-1zM345 11h1v1h-1zM349 11h1v1h-1zM356 11h1v1h-1zM344 12h3v1h-3zM349 12h1v1h-1zM356 12h1v1h-1zM344 13h3v1h-3zM349 13h8v1h-8zM343 14h1v1h-1zM345 14h1v1h-1zM347 14h1v1h-1zM343 15h1v1h-1zM345 15h1v1h-1zM342 16h1v1h-1zM345 16h1v1h-1zM350 16h1v1h-1zM354 16h1v1h-1zM342 17h1v1h-1zM345 17h1v1h-1zM350 17h1v1h-1zM355 17h1v1h-1zM345 18h1v1h-1zM350 18h1v1h-1zM355 18h1v1h-1zM345 19h1v1h-1zM349 19h1v1h-1zM356 19h1v1h-1zM345 20h1v1h-1zM348 20h2v1h-2zM356 20h1v1h-1zM345 21h1v1h-1z"/><path fill="#ffffff" aria-label="分" d="M378 6h1v1h-1zM384 6h1v1h-1zM378 7h1v1h-1zM384 7h1v1h-1zM377 8h1v1h-1zM385 8h1v1h-1zM377 9h1v1h-1zM385 9h2v1h-2zM376 10h1v1h-1zM386 10h1v1h-1zM375 11h1v1h-1zM387 11h1v1h-1zM374 12h1v1h-1zM376 12h11v1h-11zM388 12h1v1h-1zM379 13h2v1h-2zM386 13h1v1h-1zM379 14h1v1h-1zM386 14h1v1h-1zM379 15h1v1h-1zM386 15h1v1h-1zM379 16h1v1h-1zM386 16h1v1h-1zM378 17h1v1h-1zM385 17h1v1h-1zM378 18h1v1h-1zM385 18h1v1h-1zM377 19h1v1h-1zM385 19h1v1h-1zM376 20h1v1h-1zM385 20h1v1h-1zM374 21h2v1h-2zM382 21h3v1h-3z"/><path fill="#ffffff" aria-label="最值保持" d="M447 5h1v1h-1zM472 5h1v1h-1zM424 6h11v1h-11zM441 6h1v1h-1zM447 6h1v1h-1zM457 6h1v1h-1zM459 6h9v1h-9zM472 6h1v1h-1zM480 6h1v1h-1zM424 7h1v1h-1zM434 7h1v1h-1zM441 7h1v1h-1zM443 7h10v1h-10zM457 7h1v1h-1zM459 7h1v1h-1zM467 7h1v1h-1zM472 7h1v1h-1zM480 7h1v1h-1zM424 8h11v1h-11zM440 8h1v1h-1zM447 8h1v1h-1zM456 8h1v1h-1zM459 8h1v1h-1zM467 8h1v1h-1zM472 8h1v1h-1zM476 8h8v1h-8zM424 9h1v1h-1zM434 9h1v1h-1zM440 9h1v1h-1zM446 9h1v1h-1zM456 9h1v1h-1zM459 9h1v1h-1zM467 9h1v1h-1zM470 9h5v1h-5zM480 9h1v1h-1zM424 10h11v1h-11zM439 10h2v1h-2zM443 10h9v1h-9zM455 10h2v1h-2zM459 10h1v1h-1zM467 10h1v1h-1zM472 10h1v1h-1zM480 10h1v1h-1zM438 11h3v1h-3zM443 11h1v1h-1zM451 11h1v1h-1zM454 11h3v1h-3zM459 11h9v1h-9zM472 11h1v1h-1zM475 11h10v1h-10zM422 12h15v1h-15zM438 12h1v1h-1zM440 12h1v1h-1zM443 12h9v1h-9zM454 12h1v1h-1zM456 12h1v1h-1zM463 12h1v1h-1zM472 12h1v1h-1zM482 12h1v1h-1zM423 13h1v1h-1zM428 13h1v1h-1zM440 13h1v1h-1zM443 13h1v1h-1zM451 13h1v1h-1zM456 13h1v1h-1zM463 13h1v1h-1zM472 13h3v1h-3zM482 13h1v1h-1zM423 14h6v1h-6zM430 14h6v1h-6zM440 14h1v1h-1zM443 14h1v1h-1zM451 14h1v1h-1zM456 14h1v1h-1zM458 14h11v1h-11zM470 14h3v1h-3zM475 14h10v1h-10zM423 15h1v1h-1zM428 15h1v1h-1zM430 15h1v1h-1zM435 15h1v1h-1zM440 15h1v1h-1zM443 15h9v1h-9zM456 15h1v1h-1zM462 15h3v1h-3zM470 15h1v1h-1zM472 15h1v1h-1zM482 15h1v1h-1zM423 16h1v1h-1zM428 16h1v1h-1zM431 16h1v1h-1zM435 16h1v1h-1zM440 16h1v1h-1zM443 16h1v1h-1zM451 16h1v1h-1zM456 16h1v1h-1zM461 16h3v1h-3zM465 16h1v1h-1zM472 16h1v1h-1zM477 16h1v1h-1zM482 16h1v1h-1zM423 17h6v1h-6zM431 17h2v1h-2zM434 17h1v1h-1zM440 17h1v1h-1zM443 17h1v1h-1zM451 17h1v1h-1zM456 17h1v1h-1zM461 17h1v1h-1zM463 17h1v1h-1zM466 17h1v1h-1zM472 17h1v1h-1zM477 17h2v1h-2zM482 17h1v1h-1zM423 18h1v1h-1zM428 18h1v1h-1zM432 18h2v1h-2zM440 18h1v1h-1zM443 18h9v1h-9zM456 18h1v1h-1zM460 18h1v1h-1zM463 18h1v1h-1zM466 18h2v1h-2zM472 18h1v1h-1zM478 18h1v1h-1zM482 18h1v1h-1zM423 19h7v1h-7zM432 19h3v1h-3zM440 19h1v1h-1zM443 19h1v1h-1zM451 19h1v1h-1zM456 19h1v1h-1zM458 19h2v1h-2zM463 19h1v1h-1zM467 19h2v1h-2zM472 19h1v1h-1zM482 19h1v1h-1zM422 20h2v1h-2zM428 20h1v1h-1zM430 20h2v1h-2zM434 20h3v1h-3zM440 20h1v1h-1zM442 20h11v1h-11zM456 20h1v1h-1zM458 20h1v1h-1zM463 20h1v1h-1zM468 20h1v1h-1zM472 20h1v1h-1zM482 20h1v1h-1zM428 21h1v1h-1zM436 21h1v1h-1zM440 21h1v1h-1zM456 21h1v1h-1zM463 21h1v1h-1zM470 21h3v1h-3zM480 21h3v1h-3z"/><path fill="#ffffff" aria-label="比" d="M350 21h1v1h-1zM343 22h1v1h-1zM350 22h1v1h-1zM343 23h1v1h-1zM350 23h1v1h-1zM343 24h1v1h-1zM350 24h1v1h-1zM343 25h1v1h-1zM350 25h1v1h-1zM355 25h1v1h-1zM343 26h1v1h-1zM350 26h1v1h-1zM354 26h2v1h-2zM343 27h6v1h-6zM350 27h1v1h-1zM352 27h2v1h-2zM343 28h1v1h-1zM350 28h2v1h-2zM343 29h1v1h-1zM350 29h1v1h-1zM343 30h1v1h-1zM350 30h1v1h-1zM343 31h1v1h-1zM350 31h1v1h-1zM343 32h1v1h-1zM350 32h1v1h-1zM356 32h1v1h-1zM343 33h1v1h-1zM350 33h1v1h-1zM356 33h1v1h-1zM343 34h1v1h-1zM350 34h1v1h-1zM356 34h1v1h-1zM343 35h5v1h-5zM350 35h1v1h-1zM356 35h1v1h-1zM343 36h3v1h-3zM351 36h5v1h-5z"/><path fill="#ffffff" aria-label="例" d="M388 21h1v1h-1zM376 22h1v1h-1zM378 22h6v1h-6zM388 22h1v1h-1zM376 23h1v1h-1zM380 23h1v1h-1zM385 23h1v1h-1zM388 23h1v1h-1zM376 24h1v1h-1zM380 24h1v1h-1zM385 24h1v1h-1zM388 24h1v1h-1zM375 25h2v1h-2zM379 25h2v1h-2zM385 25h1v1h-1zM388 25h1v1h-1zM375 26h2v1h-2zM379 26h4v1h-4zM385 26h1v1h-1zM388 26h1v1h-1zM374 27h3v1h-3zM379 27h1v1h-1zM382 27h1v1h-1zM385 27h1v1h-1zM388 27h1v1h-1zM374 28h1v1h-1zM376 28h1v1h-1zM379 28h1v1h-1zM382 28h1v1h-1zM385 28h1v1h-1zM388 28h1v1h-1zM376 29h1v1h-1zM378 29h1v1h-1zM382 29h1v1h-1zM385 29h1v1h-1zM388 29h1v1h-1zM376 30h1v1h-1zM378 30h2v1h-2zM382 30h1v1h-1zM385 30h1v1h-1zM388 30h1v1h-1zM376 31h1v1h-1zM380 31h3v1h-3zM385 31h1v1h-1zM388 31h1v1h-1zM376 32h1v1h-1zM381 32h1v1h-1zM385 32h1v1h-1zM388 32h1v1h-1zM376 33h1v1h-1zM381 33h1v1h-1zM388 33h1v1h-1zM376 34h1v1h-1zM380 34h1v1h-1zM388 34h1v1h-1zM376 35h1v1h-1zM380 35h1v1h-1zM388 35h1v1h-1zM376 36h1v1h-1zM379 36h1v1h-1zM388 36h1v1h-1zM378 37h1v1h-1zM385 37h3v1h-3z"/><path fill="#ffffff" aria-label="线路滤波" d="M431 21h1v1h-1zM447 21h1v1h-1zM479 21h1v1h-1zM425 22h1v1h-1zM431 22h1v1h-1zM433 22h2v1h-2zM439 22h5v1h-5zM447 22h1v1h-1zM455 22h1v1h-1zM463 22h1v1h-1zM471 22h2v1h-2zM479 22h1v1h-1zM424 23h1v1h-1zM431 23h1v1h-1zM435 23h1v1h-1zM443 23h1v1h-1zM446 23h2v1h-2zM456 23h1v1h-1zM463 23h5v1h-5zM473 23h1v1h-1zM479 23h1v1h-1zM424 24h1v1h-1zM431 24h1v1h-1zM443 24h1v1h-1zM446 24h6v1h-6zM463 24h1v1h-1zM475 24h10v1h-10zM423 25h1v1h-1zM430 25h6v1h-6zM443 25h1v1h-1zM445 25h1v1h-1zM450 25h1v1h-1zM459 25h10v1h-10zM475 25h1v1h-1zM479 25h1v1h-1zM484 25h1v1h-1zM423 26h1v1h-1zM426 26h1v1h-1zM429 26h1v1h-1zM431 26h1v1h-1zM439 26h6v1h-6zM447 26h1v1h-1zM449 26h2v1h-2zM459 26h1v1h-1zM462 26h1v1h-1zM468 26h1v1h-1zM470 26h1v1h-1zM475 26h1v1h-1zM479 26h1v1h-1zM483 26h1v1h-1zM422 27h5v1h-5zM431 27h1v1h-1zM441 27h1v1h-1zM448 27h2v1h-2zM454 27h2v1h-2zM459 27h1v1h-1zM462 27h4v1h-4zM471 27h2v1h-2zM475 27h1v1h-1zM479 27h1v1h-1zM422 28h2v1h-2zM425 28h1v1h-1zM431 28h1v1h-1zM434 28h3v1h-3zM441 28h1v1h-1zM447 28h3v1h-3zM456 28h1v1h-1zM459 28h4v1h-4zM472 28h1v1h-1zM475 28h9v1h-9zM424 29h1v1h-1zM429 29h5v1h-5zM441 29h1v1h-1zM446 29h2v1h-2zM449 29h2v1h-2zM459 29h1v1h-1zM462 29h1v1h-1zM467 29h1v1h-1zM475 29h1v1h-1zM477 29h1v1h-1zM482 29h2v1h-2zM424 30h1v1h-1zM428 30h1v1h-1zM432 30h1v1h-1zM436 30h1v1h-1zM439 30h1v1h-1zM441 30h3v1h-3zM445 30h3v1h-3zM450 30h3v1h-3zM458 30h2v1h-2zM463 30h5v1h-5zM475 30h1v1h-1zM477 30h1v1h-1zM482 30h1v1h-1zM423 31h1v1h-1zM425 31h2v1h-2zM432 31h1v1h-1zM435 31h1v1h-1zM439 31h1v1h-1zM441 31h1v1h-1zM444 31h3v1h-3zM451 31h2v1h-2zM458 31h1v1h-1zM473 31h1v1h-1zM475 31h1v1h-1zM478 31h1v1h-1zM482 31h1v1h-1zM422 32h3v1h-3zM432 32h1v1h-1zM434 32h2v1h-2zM439 32h1v1h-1zM441 32h1v1h-1zM445 32h7v1h-7zM456 32h1v1h-1zM458 32h1v1h-1zM464 32h1v1h-1zM472 32h1v1h-1zM475 32h1v1h-1zM478 32h1v1h-1zM481 32h1v1h-1zM432 33h3v1h-3zM439 33h1v1h-1zM441 33h1v1h-1zM445 33h1v1h-1zM451 33h1v1h-1zM456 33h1v1h-1zM458 33h1v1h-1zM460 33h1v1h-1zM462 33h1v1h-1zM464 33h1v1h-1zM467 33h1v1h-1zM472 33h1v1h-1zM474 33h1v1h-1zM479 33h2v1h-2zM426 34h2v1h-2zM432 34h2v1h-2zM439 34h1v1h-1zM441 34h1v1h-1zM445 34h1v1h-1zM451 34h1v1h-1zM455 34h1v1h-1zM458 34h1v1h-1zM460 34h1v1h-1zM462 34h1v1h-1zM465 34h1v1h-1zM467 34h1v1h-1zM471 34h1v1h-1zM474 34h1v1h-1zM479 34h2v1h-2zM423 35h3v1h-3zM430 35h2v1h-2zM433 35h1v1h-1zM436 35h1v1h-1zM438 35h6v1h-6zM445 35h1v1h-1zM451 35h1v1h-1zM455 35h1v1h-1zM458 35h1v1h-1zM460 35h1v1h-1zM462 35h1v1h-1zM468 35h1v1h-1zM471 35h1v1h-1zM474 35h1v1h-1zM478 35h1v1h-1zM481 35h2v1h-2zM422 36h1v1h-1zM428 36h3v1h-3zM433 36h2v1h-2zM436 36h1v1h-1zM438 36h1v1h-1zM445 36h7v1h-7zM454 36h1v1h-1zM457 36h1v1h-1zM459 36h1v1h-1zM462 36h1v1h-1zM466 36h1v1h-1zM468 36h1v1h-1zM470 36h1v1h-1zM473 36h1v1h-1zM476 36h2v1h-2zM482 36h3v1h-3zM434 37h3v1h-3zM451 37h1v1h-1zM457 37h1v1h-1zM462 37h5v1h-5zM475 37h1v1h-1zM484 37h1v1h-1z"/><path fill="#ffffff" aria-label="平" d="M343 39h13v1h-13zM349 40h1v1h-1zM344 41h1v1h-1zM349 41h1v1h-1zM354 41h1v1h-1zM345 42h1v1h-1zM349 42h1v1h-1zM353 42h1v1h-1zM345 43h1v1h-1zM349 43h1v1h-1zM353 43h1v1h-1zM346 44h1v1h-1zM349 44h1v1h-1zM352 44h1v1h-1zM349 45h1v1h-1zM342 46h15v1h-15zM349 47h1v1h-1zM349 48h1v1h-1zM349 49h1v1h-1zM349 50h1v1h-1zM349 51h1v1h-1zM349 52h1v1h-1zM349 53h1v1h-1z"/><path fill="#ffffff" aria-label="均" d="M376 37h1v1h-1zM376 38h1v1h-1zM382 38h1v1h-1zM376 39h1v1h-1zM382 39h1v1h-1zM376 40h1v1h-1zM381 40h8v1h-8zM376 41h1v1h-1zM381 41h1v1h-1zM388 41h1v1h-1zM374 42h5v1h-5zM380 42h1v1h-1zM388 42h1v1h-1zM376 43h1v1h-1zM379 43h2v1h-2zM388 43h1v1h-1zM376 44h1v1h-1zM382 44h1v1h-1zM388 44h1v1h-1zM376 45h1v1h-1zM383 45h1v1h-1zM388 45h1v1h-1zM376 46h1v1h-1zM384 46h1v1h-1zM388 46h1v1h-1zM376 47h1v1h-1zM385 47h1v1h-1zM388 47h1v1h-1zM376 48h1v1h-1zM378 48h2v1h-2zM384 48h2v1h-2zM387 48h1v1h-1zM376 49h2v1h-2zM382 49h2v1h-2zM387 49h1v1h-1zM374 50h2v1h-2zM380 50h2v1h-2zM387 50h1v1h-1zM387 51h1v1h-1zM387 52h1v1h-1zM383 53h4v1h-4z"/><path fill="#ffffff" aria-label="频率滤波" d="M445 37h1v1h-1zM479 37h1v1h-1zM426 38h1v1h-1zM430 38h7v1h-7zM445 38h1v1h-1zM455 38h1v1h-1zM463 38h1v1h-1zM471 38h2v1h-2zM479 38h1v1h-1zM423 39h1v1h-1zM426 39h1v1h-1zM433 39h1v1h-1zM438 39h15v1h-15zM456 39h1v1h-1zM463 39h5v1h-5zM473 39h1v1h-1zM479 39h1v1h-1zM423 40h1v1h-1zM426 40h3v1h-3zM433 40h1v1h-1zM444 40h1v1h-1zM463 40h1v1h-1zM475 40h10v1h-10zM423 41h1v1h-1zM426 41h1v1h-1zM430 41h6v1h-6zM439 41h1v1h-1zM443 41h2v1h-2zM447 41h1v1h-1zM450 41h2v1h-2zM459 41h10v1h-10zM475 41h1v1h-1zM479 41h1v1h-1zM484 41h1v1h-1zM423 42h1v1h-1zM426 42h1v1h-1zM430 42h1v1h-1zM436 42h1v1h-1zM440 42h1v1h-1zM443 42h4v1h-4zM449 42h2v1h-2zM459 42h1v1h-1zM462 42h1v1h-1zM468 42h1v1h-1zM470 42h1v1h-1zM475 42h1v1h-1zM479 42h1v1h-1zM483 42h1v1h-1zM422 43h9v1h-9zM433 43h1v1h-1zM436 43h1v1h-1zM445 43h1v1h-1zM454 43h2v1h-2zM459 43h1v1h-1zM462 43h4v1h-4zM471 43h2v1h-2zM475 43h1v1h-1zM479 43h1v1h-1zM425 44h1v1h-1zM430 44h1v1h-1zM433 44h1v1h-1zM436 44h1v1h-1zM444 44h1v1h-1zM456 44h1v1h-1zM459 44h4v1h-4zM472 44h1v1h-1zM475 44h9v1h-9zM423 45h1v1h-1zM425 45h1v1h-1zM430 45h1v1h-1zM433 45h1v1h-1zM436 45h1v1h-1zM440 45h2v1h-2zM443 45h1v1h-1zM447 45h1v1h-1zM449 45h2v1h-2zM459 45h1v1h-1zM462 45h1v1h-1zM467 45h1v1h-1zM475 45h1v1h-1zM477 45h1v1h-1zM482 45h2v1h-2zM423 46h1v1h-1zM425 46h1v1h-1zM428 46h1v1h-1zM430 46h1v1h-1zM433 46h1v1h-1zM436 46h1v1h-1zM438 46h2v1h-2zM442 46h7v1h-7zM451 46h1v1h-1zM458 46h2v1h-2zM463 46h5v1h-5zM475 46h1v1h-1zM477 46h1v1h-1zM482 46h1v1h-1zM422 47h2v1h-2zM425 47h1v1h-1zM428 47h1v1h-1zM430 47h1v1h-1zM433 47h1v1h-1zM436 47h1v1h-1zM445 47h1v1h-1zM458 47h1v1h-1zM473 47h1v1h-1zM475 47h1v1h-1zM478 47h1v1h-1zM482 47h1v1h-1zM422 48h1v1h-1zM425 48h1v1h-1zM427 48h1v1h-1zM430 48h1v1h-1zM433 48h1v1h-1zM436 48h1v1h-1zM445 48h1v1h-1zM456 48h1v1h-1zM458 48h1v1h-1zM464 48h1v1h-1zM472 48h1v1h-1zM475 48h1v1h-1zM478 48h1v1h-1zM481 48h1v1h-1zM426 49h2v1h-2zM430 49h1v1h-1zM432 49h1v1h-1zM436 49h1v1h-1zM438 49h15v1h-15zM456 49h1v1h-1zM458 49h1v1h-1zM460 49h1v1h-1zM462 49h1v1h-1zM464 49h1v1h-1zM467 49h1v1h-1zM472 49h1v1h-1zM474 49h1v1h-1zM479 49h2v1h-2zM426 50h1v1h-1zM432 50h1v1h-1zM434 50h1v1h-1zM445 50h1v1h-1zM455 50h1v1h-1zM458 50h1v1h-1zM460 50h1v1h-1zM462 50h1v1h-1zM465 50h1v1h-1zM467 50h1v1h-1zM471 50h1v1h-1zM474 50h1v1h-1zM479 50h2v1h-2zM425 51h1v1h-1zM431 51h2v1h-2zM434 51h2v1h-2zM445 51h1v1h-1zM455 51h1v1h-1zM458 51h1v1h-1zM460 51h1v1h-1zM462 51h1v1h-1zM468 51h1v1h-1zM471 51h1v1h-1zM474 51h1v1h-1zM478 51h1v1h-1zM481 51h2v1h-2zM423 52h2v1h-2zM430 52h2v1h-2zM435 52h2v1h-2zM445 52h1v1h-1zM454 52h1v1h-1zM457 52h1v1h-1zM459 52h1v1h-1zM462 52h1v1h-1zM466 52h1v1h-1zM468 52h1v1h-1zM470 52h1v1h-1zM473 52h1v1h-1zM476 52h2v1h-2zM482 52h3v1h-3zM422 53h1v1h-1zM429 53h1v1h-1zM445 53h1v1h-1zM457 53h1v1h-1zM462 53h5v1h-5zM475 53h1v1h-1zM484 53h1v1h-1z"/><path fill="#00ff00" aria-label="数值" d="M30 56h1v1h-1zM6 57h1v1h-1zM8 57h1v1h-1zM11 57h1v1h-1zM15 57h1v1h-1zM24 57h1v1h-1zM30 57h1v1h-1zM6 58h1v1h-1zM8 58h1v1h-1zM11 58h1v1h-1zM14 58h1v1h-1zM24 58h1v1h-1zM26 58h10v1h-10zM8 59h1v1h-1zM14 59h1v1h-1zM23 59h1v1h-1zM30 59h1v1h-1zM5 60h8v1h-8zM14 60h6v1h-6zM23 60h1v1h-1zM29 60h1v1h-1zM8 61h3v1h-3zM14 61h1v1h-1zM18 61h1v1h-1zM22 61h2v1h-2zM26 61h9v1h-9zM7 62h2v1h-2zM11 62h1v1h-1zM13 62h2v1h-2zM18 62h1v1h-1zM21 62h3v1h-3zM26 62h1v1h-1zM34 62h1v1h-1zM5 63h2v1h-2zM8 63h1v1h-1zM13 63h2v1h-2zM17 63h1v1h-1zM21 63h1v1h-1zM23 63h1v1h-1zM26 63h9v1h-9zM5 64h1v1h-1zM12 64h2v1h-2zM15 64h1v1h-1zM17 64h1v1h-1zM23 64h1v1h-1zM26 64h1v1h-1zM34 64h1v1h-1zM8 65h1v1h-1zM15 65h1v1h-1zM17 65h1v1h-1zM23 65h1v1h-1zM26 65h1v1h-1zM34 65h1v1h-1zM5 66h7v1h-7zM15 66h2v1h-2zM23 66h1v1h-1zM26 66h9v1h-9zM7 67h1v1h-1zM11 67h1v1h-1zM16 67h1v1h-1zM23 67h1v1h-1zM26 67h1v1h-1zM34 67h1v1h-1zM6 68h2v1h-2zM10 68h1v1h-1zM15 68h2v1h-2zM23 68h1v1h-1zM26 68h1v1h-1zM34 68h1v1h-1zM8 69h3v1h-3zM15 69h1v1h-1zM17 69h1v1h-1zM23 69h1v1h-1zM26 69h9v1h-9zM8 70h3v1h-3zM14 70h1v1h-1zM17 70h2v1h-2zM23 70h1v1h-1zM26 70h1v1h-1zM34 70h1v1h-1zM6 71h2v1h-2zM12 71h2v1h-2zM18 71h2v1h-2zM23 71h1v1h-1zM25 71h11v1h-11zM12 72h1v1h-1zM23 72h1v1h-1z"/><path fill="#00ff00" aria-label="波形" d="M70 56h1v1h-1zM62 57h2v1h-2zM70 57h1v1h-1zM77 57h9v1h-9zM89 57h2v1h-2zM64 58h1v1h-1zM70 58h1v1h-1zM79 58h1v1h-1zM83 58h1v1h-1zM88 58h2v1h-2zM66 59h10v1h-10zM79 59h1v1h-1zM83 59h1v1h-1zM87 59h2v1h-2zM66 60h1v1h-1zM70 60h1v1h-1zM75 60h1v1h-1zM79 60h1v1h-1zM83 60h1v1h-1zM86 60h1v1h-1zM61 61h1v1h-1zM66 61h1v1h-1zM70 61h1v1h-1zM74 61h1v1h-1zM79 61h1v1h-1zM83 61h1v1h-1zM91 61h1v1h-1zM62 62h2v1h-2zM66 62h1v1h-1zM70 62h1v1h-1zM79 62h1v1h-1zM83 62h1v1h-1zM90 62h1v1h-1zM63 63h1v1h-1zM66 63h9v1h-9zM77 63h9v1h-9zM89 63h1v1h-1zM66 64h1v1h-1zM68 64h1v1h-1zM73 64h2v1h-2zM79 64h1v1h-1zM83 64h1v1h-1zM87 64h2v1h-2zM66 65h1v1h-1zM68 65h1v1h-1zM73 65h1v1h-1zM79 65h1v1h-1zM83 65h1v1h-1zM86 65h2v1h-2zM64 66h1v1h-1zM66 66h1v1h-1zM69 66h1v1h-1zM73 66h1v1h-1zM79 66h1v1h-1zM83 66h1v1h-1zM63 67h1v1h-1zM66 67h1v1h-1zM69 67h1v1h-1zM72 67h1v1h-1zM79 67h1v1h-1zM83 67h1v1h-1zM91 67h1v1h-1zM63 68h1v1h-1zM65 68h1v1h-1zM70 68h2v1h-2zM78 68h2v1h-2zM83 68h1v1h-1zM90 68h1v1h-1zM62 69h1v1h-1zM65 69h1v1h-1zM70 69h2v1h-2zM78 69h1v1h-1zM83 69h1v1h-1zM89 69h1v1h-1zM62 70h1v1h-1zM65 70h1v1h-1zM69 70h1v1h-1zM72 70h2v1h-2zM78 70h1v1h-1zM83 70h1v1h-1zM87 70h2v1h-2zM61 71h1v1h-1zM64 71h1v1h-1zM67 71h2v1h-2zM73 71h3v1h-3zM77 71h1v1h-1zM83 71h1v1h-1zM86 71h2v1h-2zM66 72h1v1h-1zM75 72h1v1h-1zM77 72h1v1h-1zM83 72h1v1h-1z"/><path fill="#00ff00" aria-label="波形格式" d="M697 12h1v1h-1zM729 12h1v1h-1zM689 13h2v1h-2zM697 13h1v1h-1zM704 13h9v1h-9zM716 13h2v1h-2zM723 13h1v1h-1zM728 13h1v1h-1zM745 13h1v1h-1zM747 13h2v1h-2zM691 14h1v1h-1zM697 14h1v1h-1zM706 14h1v1h-1zM710 14h1v1h-1zM715 14h2v1h-2zM723 14h1v1h-1zM728 14h6v1h-6zM745 14h1v1h-1zM748 14h2v1h-2zM693 15h10v1h-10zM706 15h1v1h-1zM710 15h1v1h-1zM714 15h2v1h-2zM723 15h1v1h-1zM727 15h2v1h-2zM732 15h1v1h-1zM745 15h1v1h-1zM693 16h1v1h-1zM697 16h1v1h-1zM702 16h1v1h-1zM706 16h1v1h-1zM710 16h1v1h-1zM713 16h1v1h-1zM720 16h9v1h-9zM732 16h1v1h-1zM736 16h15v1h-15zM688 17h1v1h-1zM693 17h1v1h-1zM697 17h1v1h-1zM701 17h1v1h-1zM706 17h1v1h-1zM710 17h1v1h-1zM718 17h1v1h-1zM722 17h2v1h-2zM725 17h2v1h-2zM729 17h1v1h-1zM731 17h1v1h-1zM745 17h1v1h-1zM689 18h2v1h-2zM693 18h1v1h-1zM697 18h1v1h-1zM706 18h1v1h-1zM710 18h1v1h-1zM717 18h1v1h-1zM722 18h2v1h-2zM729 18h3v1h-3zM745 18h1v1h-1zM690 19h1v1h-1zM693 19h9v1h-9zM704 19h9v1h-9zM716 19h1v1h-1zM722 19h3v1h-3zM729 19h3v1h-3zM745 19h1v1h-1zM693 20h1v1h-1zM695 20h1v1h-1zM700 20h2v1h-2zM706 20h1v1h-1zM710 20h1v1h-1zM714 20h2v1h-2zM721 20h4v1h-4zM728 20h2v1h-2zM731 20h2v1h-2zM737 20h7v1h-7zM745 20h1v1h-1zM693 21h1v1h-1zM695 21h1v1h-1zM700 21h1v1h-1zM706 21h1v1h-1zM710 21h1v1h-1zM713 21h2v1h-2zM721 21h1v1h-1zM723 21h1v1h-1zM725 21h4v1h-4zM732 21h3v1h-3zM740 21h1v1h-1zM745 21h1v1h-1zM691 22h1v1h-1zM693 22h1v1h-1zM696 22h1v1h-1zM700 22h1v1h-1zM706 22h1v1h-1zM710 22h1v1h-1zM721 22h1v1h-1zM723 22h1v1h-1zM725 22h10v1h-10zM740 22h1v1h-1zM746 22h1v1h-1zM690 23h1v1h-1zM693 23h1v1h-1zM696 23h1v1h-1zM699 23h1v1h-1zM706 23h1v1h-1zM710 23h1v1h-1zM718 23h1v1h-1zM720 23h1v1h-1zM723 23h1v1h-1zM727 23h1v1h-1zM733 23h1v1h-1zM740 23h1v1h-1zM746 23h1v1h-1zM690 24h1v1h-1zM692 24h1v1h-1zM697 24h2v1h-2zM705 24h2v1h-2zM710 24h1v1h-1zM717 24h1v1h-1zM720 24h1v1h-1zM723 24h1v1h-1zM727 24h1v1h-1zM733 24h1v1h-1zM740 24h1v1h-1zM746 24h1v1h-1zM689 25h1v1h-1zM692 25h1v1h-1zM697 25h2v1h-2zM705 25h1v1h-1zM710 25h1v1h-1zM716 25h1v1h-1zM723 25h1v1h-1zM727 25h1v1h-1zM733 25h1v1h-1zM740 25h1v1h-1zM746 25h2v1h-2zM750 25h1v1h-1zM689 26h1v1h-1zM692 26h1v1h-1zM696 26h1v1h-1zM699 26h2v1h-2zM705 26h1v1h-1zM710 26h1v1h-1zM714 26h2v1h-2zM723 26h1v1h-1zM727 26h1v1h-1zM733 26h1v1h-1zM739 26h5v1h-5zM747 26h1v1h-1zM750 26h1v1h-1zM688 27h1v1h-1zM691 27h1v1h-1zM694 27h2v1h-2zM700 27h3v1h-3zM704 27h1v1h-1zM710 27h1v1h-1zM713 27h2v1h-2zM723 27h1v1h-1zM727 27h7v1h-7zM736 27h4v1h-4zM747 27h2v1h-2zM750 27h1v1h-1zM693 28h1v1h-1zM702 28h1v1h-1zM704 28h1v1h-1zM710 28h1v1h-1zM727 28h1v1h-1zM733 28h1v1h-1zM748 28h3v1h-3z"/><path fill="#ffffff" aria-label="显示格式" d="M729 69h1v1h-1zM690 70h11v1h-11zM723 70h1v1h-1zM728 70h1v1h-1zM745 70h1v1h-1zM747 70h2v1h-2zM690 71h1v1h-1zM700 71h1v1h-1zM706 71h11v1h-11zM723 71h1v1h-1zM728 71h6v1h-6zM745 71h1v1h-1zM748 71h2v1h-2zM690 72h1v1h-1zM700 72h1v1h-1zM723 72h1v1h-1zM727 72h2v1h-2zM732 72h1v1h-1zM745 72h1v1h-1zM690 73h11v1h-11zM720 73h9v1h-9zM732 73h1v1h-1zM736 73h15v1h-15zM690 74h1v1h-1zM700 74h1v1h-1zM722 74h2v1h-2zM725 74h2v1h-2zM729 74h1v1h-1zM731 74h1v1h-1zM745 74h1v1h-1zM690 75h1v1h-1zM700 75h1v1h-1zM704 75h15v1h-15zM722 75h2v1h-2zM729 75h3v1h-3zM745 75h1v1h-1zM690 76h11v1h-11zM711 76h1v1h-1zM722 76h3v1h-3zM729 76h3v1h-3zM745 76h1v1h-1zM711 77h1v1h-1zM721 77h4v1h-4zM728 77h2v1h-2zM731 77h2v1h-2zM737 77h7v1h-7zM745 77h1v1h-1zM693 78h1v1h-1zM697 78h1v1h-1zM707 78h1v1h-1zM711 78h1v1h-1zM715 78h1v1h-1zM721 78h1v1h-1zM723 78h1v1h-1zM725 78h4v1h-4zM732 78h3v1h-3zM740 78h1v1h-1zM745 78h1v1h-1zM689 79h2v1h-2zM693 79h1v1h-1zM697 79h1v1h-1zM700 79h2v1h-2zM707 79h1v1h-1zM711 79h1v1h-1zM715 79h1v1h-1zM721 79h1v1h-1zM723 79h1v1h-1zM725 79h10v1h-10zM740 79h1v1h-1zM746 79h1v1h-1zM690 80h1v1h-1zM693 80h1v1h-1zM697 80h1v1h-1zM700 80h1v1h-1zM706 80h1v1h-1zM711 80h1v1h-1zM716 80h1v1h-1zM720 80h1v1h-1zM723 80h1v1h-1zM727 80h1v1h-1zM733 80h1v1h-1zM740 80h1v1h-1zM746 80h1v1h-1zM691 81h1v1h-1zM693 81h1v1h-1zM697 81h1v1h-1zM699 81h1v1h-1zM705 81h2v1h-2zM711 81h1v1h-1zM717 81h1v1h-1zM720 81h1v1h-1zM723 81h1v1h-1zM727 81h1v1h-1zM733 81h1v1h-1zM740 81h1v1h-1zM746 81h1v1h-1zM691 82h1v1h-1zM693 82h1v1h-1zM697 82h1v1h-1zM705 82h1v1h-1zM711 82h1v1h-1zM717 82h1v1h-1zM723 82h1v1h-1zM727 82h1v1h-1zM733 82h1v1h-1zM740 82h1v1h-1zM746 82h2v1h-2zM750 82h1v1h-1zM693 83h1v1h-1zM697 83h1v1h-1zM704 83h1v1h-1zM711 83h1v1h-1zM717 83h2v1h-2zM723 83h1v1h-1zM727 83h1v1h-1zM733 83h1v1h-1zM739 83h5v1h-5zM747 83h1v1h-1zM750 83h1v1h-1zM688 84h15v1h-15zM711 84h1v1h-1zM723 84h1v1h-1zM727 84h7v1h-7zM736 84h4v1h-4zM747 84h2v1h-2zM750 84h1v1h-1zM708 85h4v1h-4zM727 85h1v1h-1zM733 85h1v1h-1zM748 85h3v1h-3z"/><path fill="#ffffff" aria-label="时间" d="M700 148h1v1h-1zM700 149h1v1h-1zM705 149h2v1h-2zM709 149h9v1h-9zM688 150h6v1h-6zM700 150h1v1h-1zM706 150h2v1h-2zM717 150h1v1h-1zM688 151h1v1h-1zM693 151h1v1h-1zM700 151h1v1h-1zM717 151h1v1h-1zM688 152h1v1h-1zM693 152h10v1h-10zM705 152h1v1h-1zM717 152h1v1h-1zM688 153h1v1h-1zM693 153h1v1h-1zM700 153h1v1h-1zM705 153h1v1h-1zM708 153h6v1h-6zM717 153h1v1h-1zM688 154h1v1h-1zM693 154h1v1h-1zM700 154h1v1h-1zM705 154h1v1h-1zM708 154h1v1h-1zM714 154h1v1h-1zM717 154h1v1h-1zM688 155h6v1h-6zM695 155h2v1h-2zM700 155h1v1h-1zM705 155h1v1h-1zM708 155h1v1h-1zM714 155h1v1h-1zM717 155h1v1h-1zM688 156h1v1h-1zM693 156h1v1h-1zM696 156h1v1h-1zM700 156h1v1h-1zM705 156h1v1h-1zM708 156h1v1h-1zM714 156h1v1h-1zM717 156h1v1h-1zM688 157h1v1h-1zM693 157h1v1h-1zM697 157h1v1h-1zM700 157h1v1h-1zM705 157h1v1h-1zM708 157h7v1h-7zM717 157h1v1h-1zM688 158h1v1h-1zM693 158h1v1h-1zM697 158h1v1h-1zM700 158h1v1h-1zM705 158h1v1h-1zM708 158h1v1h-1zM714 158h1v1h-1zM717 158h1v1h-1zM688 159h1v1h-1zM693 159h1v1h-1zM700 159h1v1h-1zM705 159h1v1h-1zM708 159h1v1h-1zM714 159h1v1h-1zM717 159h1v1h-1zM688 160h6v1h-6zM700 160h1v1h-1zM705 160h1v1h-1zM708 160h1v1h-1zM714 160h1v1h-1zM717 160h1v1h-1zM688 161h1v1h-1zM700 161h1v1h-1zM705 161h1v1h-1zM708 161h6v1h-6zM717 161h1v1h-1zM688 162h1v1h-1zM700 162h1v1h-1zM705 162h1v1h-1zM717 162h1v1h-1zM700 163h1v1h-1zM705 163h1v1h-1zM717 163h1v1h-1zM697 164h4v1h-4zM705 164h1v1h-1zM715 164h3v1h-3z"/><path fill="#ffffff" aria-label="波形映射" d="M697 388h1v1h-1zM730 388h1v1h-1zM689 389h2v1h-2zM697 389h1v1h-1zM704 389h9v1h-9zM716 389h2v1h-2zM720 389h5v1h-5zM730 389h1v1h-1zM739 389h1v1h-1zM748 389h1v1h-1zM691 390h1v1h-1zM697 390h1v1h-1zM706 390h1v1h-1zM710 390h1v1h-1zM715 390h2v1h-2zM720 390h1v1h-1zM724 390h1v1h-1zM730 390h1v1h-1zM737 390h6v1h-6zM748 390h1v1h-1zM693 391h10v1h-10zM706 391h1v1h-1zM710 391h1v1h-1zM714 391h2v1h-2zM720 391h1v1h-1zM724 391h1v1h-1zM727 391h7v1h-7zM737 391h1v1h-1zM742 391h1v1h-1zM748 391h1v1h-1zM693 392h1v1h-1zM697 392h1v1h-1zM702 392h1v1h-1zM706 392h1v1h-1zM710 392h1v1h-1zM713 392h1v1h-1zM720 392h1v1h-1zM724 392h1v1h-1zM726 392h1v1h-1zM730 392h1v1h-1zM733 392h1v1h-1zM737 392h1v1h-1zM742 392h1v1h-1zM748 392h1v1h-1zM688 393h1v1h-1zM693 393h1v1h-1zM697 393h1v1h-1zM701 393h1v1h-1zM706 393h1v1h-1zM710 393h1v1h-1zM718 393h1v1h-1zM720 393h1v1h-1zM724 393h1v1h-1zM726 393h1v1h-1zM730 393h1v1h-1zM733 393h1v1h-1zM737 393h14v1h-14zM689 394h2v1h-2zM693 394h1v1h-1zM697 394h1v1h-1zM706 394h1v1h-1zM710 394h1v1h-1zM717 394h1v1h-1zM720 394h1v1h-1zM724 394h1v1h-1zM726 394h1v1h-1zM730 394h1v1h-1zM733 394h1v1h-1zM737 394h1v1h-1zM742 394h1v1h-1zM748 394h1v1h-1zM690 395h1v1h-1zM693 395h9v1h-9zM704 395h9v1h-9zM716 395h1v1h-1zM720 395h5v1h-5zM726 395h1v1h-1zM730 395h1v1h-1zM733 395h1v1h-1zM737 395h6v1h-6zM744 395h1v1h-1zM748 395h1v1h-1zM693 396h1v1h-1zM695 396h1v1h-1zM700 396h2v1h-2zM706 396h1v1h-1zM710 396h1v1h-1zM714 396h2v1h-2zM720 396h1v1h-1zM724 396h1v1h-1zM726 396h1v1h-1zM730 396h1v1h-1zM733 396h1v1h-1zM737 396h1v1h-1zM742 396h1v1h-1zM745 396h1v1h-1zM748 396h1v1h-1zM693 397h1v1h-1zM695 397h1v1h-1zM700 397h1v1h-1zM706 397h1v1h-1zM710 397h1v1h-1zM713 397h2v1h-2zM720 397h1v1h-1zM724 397h11v1h-11zM737 397h1v1h-1zM742 397h1v1h-1zM745 397h1v1h-1zM748 397h1v1h-1zM691 398h1v1h-1zM693 398h1v1h-1zM696 398h1v1h-1zM700 398h1v1h-1zM706 398h1v1h-1zM710 398h1v1h-1zM720 398h1v1h-1zM724 398h1v1h-1zM729 398h2v1h-2zM736 398h7v1h-7zM746 398h1v1h-1zM748 398h1v1h-1zM690 399h1v1h-1zM693 399h1v1h-1zM696 399h1v1h-1zM699 399h1v1h-1zM706 399h1v1h-1zM710 399h1v1h-1zM718 399h1v1h-1zM720 399h1v1h-1zM724 399h1v1h-1zM729 399h3v1h-3zM740 399h1v1h-1zM742 399h1v1h-1zM746 399h1v1h-1zM748 399h1v1h-1zM690 400h1v1h-1zM692 400h1v1h-1zM697 400h2v1h-2zM705 400h2v1h-2zM710 400h1v1h-1zM717 400h1v1h-1zM720 400h5v1h-5zM729 400h1v1h-1zM731 400h1v1h-1zM739 400h1v1h-1zM742 400h1v1h-1zM748 400h1v1h-1zM689 401h1v1h-1zM692 401h1v1h-1zM697 401h2v1h-2zM705 401h1v1h-1zM710 401h1v1h-1zM716 401h1v1h-1zM720 401h1v1h-1zM728 401h1v1h-1zM731 401h2v1h-2zM738 401h2v1h-2zM742 401h1v1h-1zM748 401h1v1h-1zM689 402h1v1h-1zM692 402h1v1h-1zM696 402h1v1h-1zM699 402h2v1h-2zM705 402h1v1h-1zM710 402h1v1h-1zM714 402h2v1h-2zM727 402h1v1h-1zM732 402h1v1h-1zM737 402h1v1h-1zM742 402h1v1h-1zM748 402h1v1h-1zM688 403h1v1h-1zM691 403h1v1h-1zM694 403h2v1h-2zM700 403h3v1h-3zM704 403h1v1h-1zM710 403h1v1h-1zM713 403h2v1h-2zM725 403h2v1h-2zM733 403h2v1h-2zM736 403h1v1h-1zM742 403h1v1h-1zM748 403h1v1h-1zM693 404h1v1h-1zM702 404h1v1h-1zM704 404h1v1h-1zM710 404h1v1h-1zM734 404h1v1h-1zM740 404h2v1h-2zM746 404h3v1h-3z"/></svg></body></html>
